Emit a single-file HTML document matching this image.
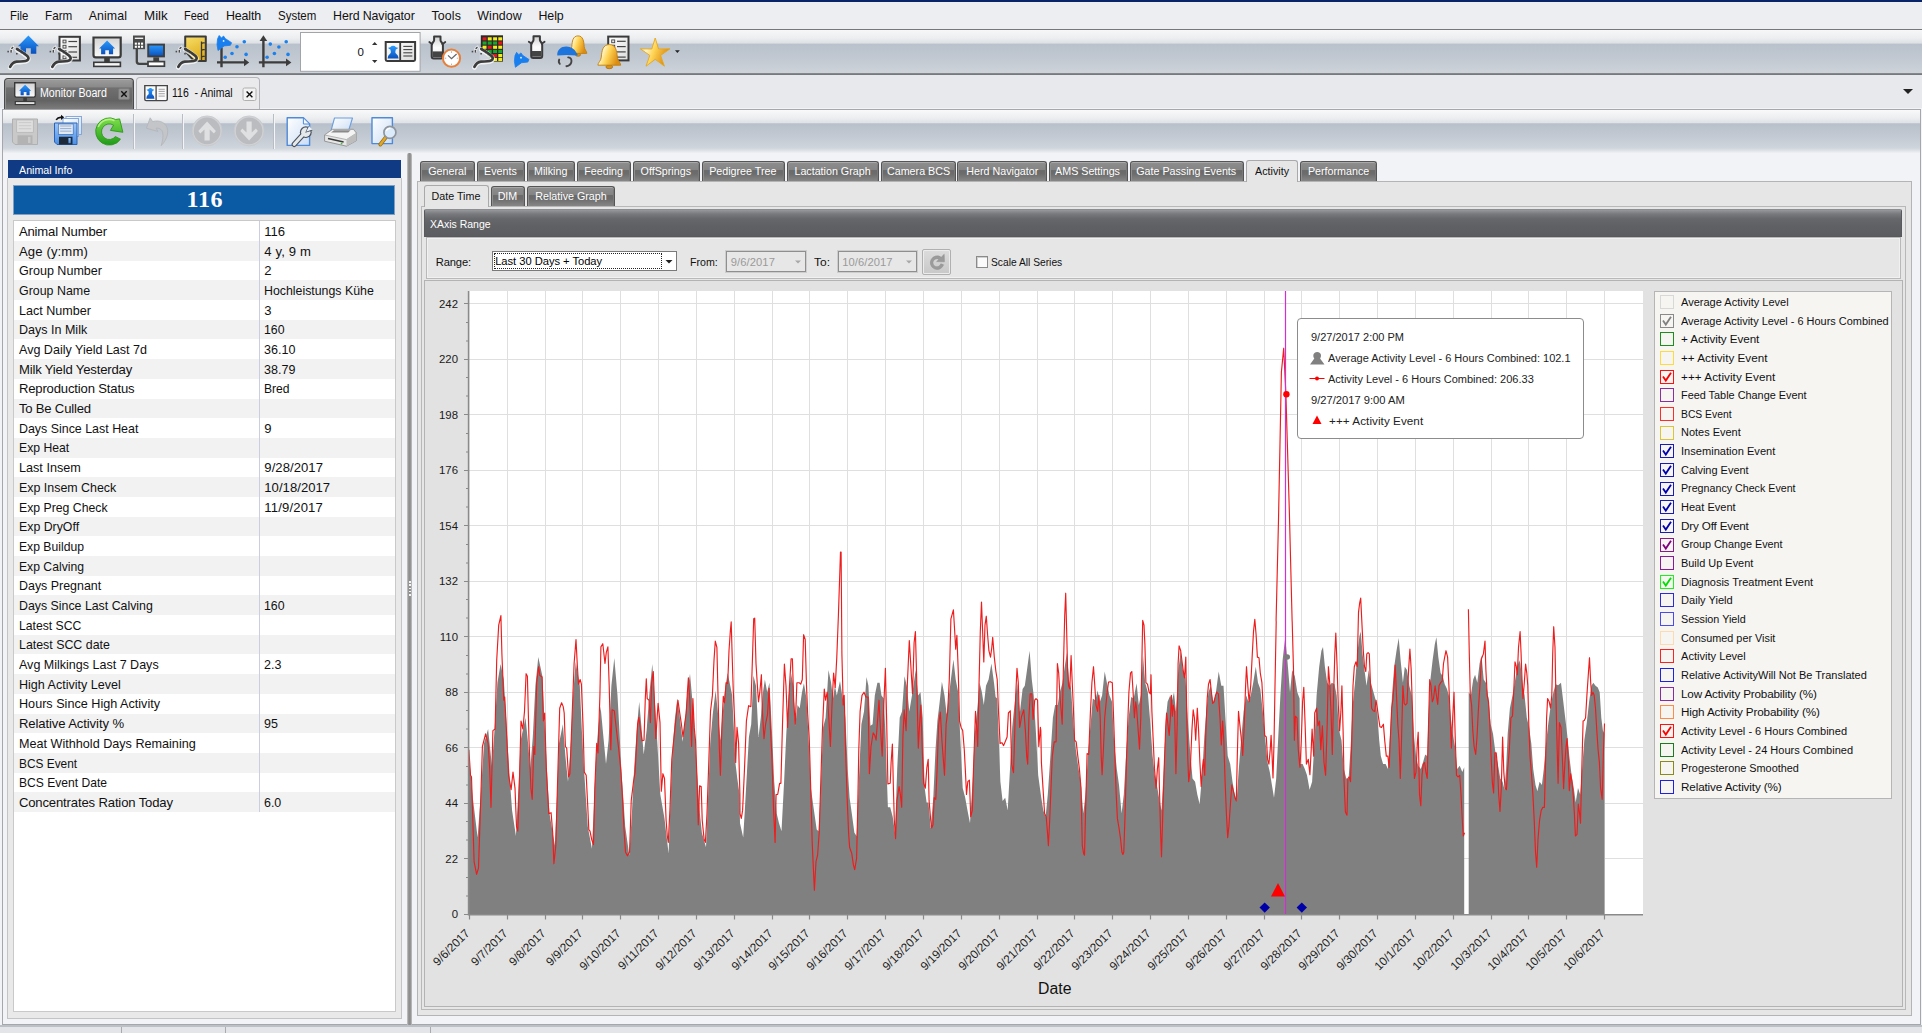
<!DOCTYPE html><html><head><meta charset="utf-8"><title>116 - Animal</title><style>
*{box-sizing:border-box;margin:0;padding:0}
html,body{width:1922px;height:1033px;overflow:hidden;background:#f2f3f7;font-family:"Liberation Sans",sans-serif;font-size:12px;color:#000}
.abs{position:absolute}
.t{position:absolute;white-space:nowrap;line-height:1}
#topline{left:0;top:0;width:1922px;height:2px;background:#0a246a}
#menubar{left:0;top:2px;width:1922px;height:27px;background:#edeef1}
#menubar .t{top:7px;font-size:12.6px;color:#111}
#menuline{left:0;top:29px;width:1922px;height:1px;background:#75777a}
#toolbar{left:0;top:30px;width:1922px;height:43px;background:linear-gradient(#f7f7f8 0,#eceef0 8px,#dee1e5 13px,#b9c1cc 14.2px,#c0c7d0 26px,#ced3da 43px)}
#toolline{left:0;top:73px;width:1922px;height:2px;background:linear-gradient(#8b8e92,#6f7276)}
#tabstrip{left:0;top:75px;width:1922px;height:33px;background:#e8e9ec}
#docarea{left:2px;top:109px;width:1919px;height:916px;background:#f2f3f7;border:1px solid #a5a7ab}
#doctool{left:3px;top:110px;width:1917px;height:43px;background:linear-gradient(#f9f9fa 0,#eceef0 8px,#dfe2e6 12.6px,#b8c0cb 13.8px,#c3cad3 27px,#cfd5dc 38px,#eef0f4 43px)}
.tab1{position:absolute;top:78px;height:30px;border-radius:4px 4px 0 0}
.sep{position:absolute;width:1px;top:114px;height:35px;background:#b9bdc3;border-right:1px solid #f4f5f7;box-sizing:content-box}
/* left panel */
#lp-head{left:8px;top:159.6px;width:392.5px;height:18.7px;background:#103a83}
#lp-body{left:7px;top:178px;width:395px;height:841px;background:#e9e9e9;border:1px solid #c4c4c4;border-top:none}
#lp-num{left:13px;top:185px;width:382.4px;height:30px;background:#0b5aa4;border:1px solid #7f9fc4;color:#fff;font-family:"Liberation Serif",serif;font-weight:bold;font-size:21.3px;letter-spacing:0.6px;text-indent:0.6px;text-align:center;line-height:29.8px}
#lp-tab{left:13px;top:220px;width:383px;height:792px;background:#fff;border:1px solid #c9c9c9}
.row{position:absolute;left:14px;width:381px;height:19.7px}
.row.alt{background:#f2f2f2}
.row .t{top:3.6px;font-size:13.1px;letter-spacing:-0.16px;color:#111}
#coldiv{left:259px;top:221px;width:1px;height:591px;background:#c7cfe0}
/* splitter */
#split{left:407px;top:153px;width:4.6px;height:872px;background:linear-gradient(90deg,#c9c9c9,#8f8f8f 35%,#8d8d8d 65%,#c4c4c4);border-radius:2px 2px 0 0}
/* right panel */
#rp{left:417.4px;top:180.6px;width:1494.6px;height:835px;background:#e6e6e6;border:1px solid #b4b4b4}
.tab2{position:absolute;height:20px;border-radius:3px 3px 0 0;color:#fff;font-size:11.4px;text-align:center;line-height:19px;white-space:nowrap;
 background:linear-gradient(#8e8e8e 0,#848484 40%,#6a6a6a 45%,#6c6c6c 62%,#868686 100%);border:1px solid #555;border-bottom:none;box-shadow:inset 0 1px 0 #a9a9a9, inset 1px 0 0 #8f8f8f, inset -1px 0 0 #7a7a7a}
.tab2 span{display:inline-block;transform:scaleX(0.94)}
.tab2.sel{background:#e6e6e6;color:#111;border:1px solid #a9a9a9;border-bottom:none;box-shadow:none}
#inner{left:421px;top:206px;width:1485px;height:804px;border:1px solid #b8b8b8;background:#e6e6e6}
#xhead{left:424px;top:209px;width:1478px;height:28px;border-radius:2px 2px 0 0;background:linear-gradient(#97989b 0,#78797d 4px,#66676b 9px,#606165 60%,#5c5d61 100%);border:1px solid #58595d;border-top-color:#8d8e91;color:#fff;font-size:12px}
#xbox{left:426px;top:237px;width:1475px;height:42px;border:1px solid #b9b9b9;background:#e6e6e6;box-shadow:inset 0 0 0 1px #f1f1f1}
#chartpanel{left:424px;top:280px;width:1479px;height:727px;border:1px solid #b3b3b3;background:#e2e2e2}
#legend{left:1654px;top:291px;width:238px;height:508px;background:#f6f5f2;border:1px solid #b5b5b5}
.lg{position:absolute;left:1660px;width:14px;height:14px;border:1px solid #000;background:#f6f5f2}
.lgt{position:absolute;left:1681px;font-size:11.5px;letter-spacing:-0.25px;white-space:nowrap;line-height:1;color:#111}
#tooltip{left:1297px;top:318px;width:287px;height:121px;background:#fff;border:1px solid #8c8c8c;border-radius:4px}
#tooltip .t{font-size:11.8px;color:#222}
#status{left:0;top:1025px;width:1922px;height:8px;background:#e4e5e8;border-top:2px solid #bcc0c7}
.input{position:absolute;background:#fff;border:1px solid #8e8e8e}

#lp-num span{display:inline-block;transform:scale(1.13,1.04)}

</style></head><body>
<div class="abs" id="menubar"></div><div class="abs" id="topline"></div><div class="abs" id="menuline"></div>
<div class="t" style="left:9.7px;top:9.5px;font-size:12.4px;transform:scaleX(0.9159);transform-origin:0 50%;color:#111;">File</div>
<div class="t" style="left:44.7px;top:9.5px;font-size:12.4px;transform:scaleX(0.9436);transform-origin:0 50%;color:#111;">Farm</div>
<div class="t" style="left:88.7px;top:9.5px;font-size:12.4px;letter-spacing:0.066px;color:#111;">Animal</div>
<div class="t" style="left:143.7px;top:9.5px;font-size:12.4px;transform:scaleX(1.0799);transform-origin:0 50%;color:#111;">Milk</div>
<div class="t" style="left:184.1px;top:9.5px;font-size:12.4px;transform:scaleX(0.8810);transform-origin:0 50%;color:#111;">Feed</div>
<div class="t" style="left:226.0px;top:9.5px;font-size:12.4px;letter-spacing:-0.141px;color:#111;">Health</div>
<div class="t" style="left:278.1px;top:9.5px;font-size:12.4px;transform:scaleX(0.9264);transform-origin:0 50%;color:#111;">System</div>
<div class="t" style="left:333.1px;top:9.5px;font-size:12.4px;letter-spacing:-0.128px;color:#111;">Herd Navigator</div>
<div class="t" style="left:431.4px;top:9.5px;font-size:12.4px;letter-spacing:0.130px;color:#111;">Tools</div>
<div class="t" style="left:477.3px;top:9.5px;font-size:12.4px;letter-spacing:0.066px;color:#111;">Window</div>
<div class="t" style="left:538.5px;top:9.5px;font-size:12.4px;letter-spacing:-0.076px;color:#111;">Help</div>
<div class="abs" id="toolbar"></div><div class="abs" id="toolline"></div><div class="abs" id="tabstrip"></div>
<svg class="abs" style="left:0;top:30px" width="720" height="44" viewBox="0 30 720 44">
<defs><linearGradient id="gblue" x1="0" y1="0" x2="0" y2="1"><stop offset="0" stop-color="#2a9bff"/><stop offset="1" stop-color="#0a50bd"/></linearGradient><linearGradient id="ggold" x1="0" y1="0" x2="1" y2="1"><stop offset="0" stop-color="#fff3b0"/><stop offset="0.5" stop-color="#ffd24a"/><stop offset="1" stop-color="#e8a21a"/></linearGradient><linearGradient id="gyel" x1="0" y1="0" x2="1" y2="1"><stop offset="0" stop-color="#ffe27a"/><stop offset="1" stop-color="#e3b024"/></linearGradient><linearGradient id="gmon" x1="0" y1="0" x2="0" y2="1"><stop offset="0" stop-color="#d4d4d4"/><stop offset="1" stop-color="#fafafa"/></linearGradient></defs>
<defs><linearGradient id="gsheet" x1="0" y1="0" x2="1" y2="1"><stop offset="0" stop-color="#ffffff"/><stop offset="1" stop-color="#dcdcdc"/></linearGradient><linearGradient id="gbell" x1="0" y1="0" x2="1" y2="0.35"><stop offset="0" stop-color="#f7c648"/><stop offset="0.3" stop-color="#fff4c4"/><stop offset="0.55" stop-color="#ffd455"/><stop offset="1" stop-color="#dd8c12"/></linearGradient><linearGradient id="gbot" x1="0" y1="0" x2="0" y2="1"><stop offset="0" stop-color="#cfcfcf"/><stop offset="0.5" stop-color="#fbfbfb"/><stop offset="1" stop-color="#eeeeee"/></linearGradient><linearGradient id="gnote" x1="0" y1="0" x2="0.4" y2="1"><stop offset="0" stop-color="#f8de6a"/><stop offset="1" stop-color="#dfae1c"/></linearGradient></defs>
<path d="M28.4,35.4 L38.9,46.2 L36.3,46.2 L36.3,53.7 L30.799999999999997,53.7 L30.799999999999997,48.3 L26.0,48.3 L26.0,53.7 L20.5,53.7 L20.5,46.2 L17.9,46.2 Z" fill="url(#gblue)"/>
<path d="M10.1,66.9 C11.8,63.5 13.5,62 16.5,61.7 C19.5,61.4 23,61.6 25.5,61 C28,60.4 29,58.6 28.2,57.2 C27.3,55.6 24.5,54 22.3,52.3 C20.3,50.9 18.5,50 16.9,48.9" fill="none" stroke="#fff" stroke-opacity="0.75" stroke-width="4.6" stroke-linecap="round" transform="translate(0,0.6)"/><path d="M10.1,66.9 C11.8,63.5 13.5,62 16.5,61.7 C19.5,61.4 23,61.6 25.5,61 C28,60.4 29,58.6 28.2,57.2 C27.3,55.6 24.5,54 22.3,52.3 C20.3,50.9 18.5,50 16.9,48.9" fill="none" stroke="#3c3c3c" stroke-width="2.7" stroke-linecap="round"/><path d="M11.2,52.6 Q10.4,48 14.2,46.6" fill="none" stroke="#fff" stroke-opacity="0.7" stroke-width="3"/><path d="M11.2,52.6 Q10.4,48 14.2,46.6" fill="none" stroke="#4a4a4a" stroke-width="1.5" stroke-dasharray="2.6 1.1"/><rect x="7.4" y="50.8" width="1.5" height="1.6" fill="#4a4a4a"/><rect x="16" y="53" width="1.6" height="1.5" fill="#4a4a4a"/>
<rect x="59.5" y="36.8" width="20.400000000000006" height="23.700000000000003" fill="url(#gsheet)" stroke="#3a3a3a" stroke-width="2"/><rect x="63.0" y="40.1" width="3" height="2.8" fill="#e8e8e8" stroke="#444" stroke-width="0.9"/><path d="M68.4,41.5 H77.1" stroke="#444" stroke-width="1.2"/><rect x="63.0" y="45.3" width="3" height="2.8" fill="#e8e8e8" stroke="#444" stroke-width="0.9"/><path d="M68.4,46.7 H77.1" stroke="#444" stroke-width="1.2"/><rect x="63.0" y="50.6" width="3" height="2.8" fill="#e8e8e8" stroke="#444" stroke-width="0.9"/><path d="M68.4,52.0 H77.1" stroke="#444" stroke-width="1.2"/><rect x="63.0" y="55.9" width="3" height="2.8" fill="#e8e8e8" stroke="#444" stroke-width="0.9"/><path d="M68.4,57.3 H77.1" stroke="#444" stroke-width="1.2"/>
<path d="M52.300000000000004,66.9 C54.0,63.5 55.7,62 58.7,61.7 C61.7,61.4 65.2,61.6 67.7,61 C70.2,60.4 71.2,58.6 70.4,57.2 C69.5,55.6 66.7,54 64.5,52.3 C62.5,50.9 60.7,50 59.1,48.9" fill="none" stroke="#fff" stroke-opacity="0.75" stroke-width="4.6" stroke-linecap="round" transform="translate(0,0.6)"/><path d="M52.300000000000004,66.9 C54.0,63.5 55.7,62 58.7,61.7 C61.7,61.4 65.2,61.6 67.7,61 C70.2,60.4 71.2,58.6 70.4,57.2 C69.5,55.6 66.7,54 64.5,52.3 C62.5,50.9 60.7,50 59.1,48.9" fill="none" stroke="#3c3c3c" stroke-width="2.7" stroke-linecap="round"/><path d="M53.400000000000006,52.6 Q52.6,48 56.400000000000006,46.6" fill="none" stroke="#fff" stroke-opacity="0.7" stroke-width="3"/><path d="M53.400000000000006,52.6 Q52.6,48 56.400000000000006,46.6" fill="none" stroke="#4a4a4a" stroke-width="1.5" stroke-dasharray="2.6 1.1"/><rect x="49.6" y="50.8" width="1.5" height="1.6" fill="#4a4a4a"/><rect x="58.2" y="53" width="1.6" height="1.5" fill="#4a4a4a"/>
<path d="M93.5,37.5 H120.7 V55 Q120.7,57.4 118.3,57.4 H95.9 Q93.5,57.4 93.5,55 Z" fill="url(#gmon)" stroke="#3a3a3a" stroke-width="2.2"/>
<path d="M107.1,40.4 L115.08,48.608 L113.104,48.608 L113.104,54.308 L108.92399999999999,54.308 L108.92399999999999,50.204 L105.276,50.204 L105.276,54.308 L101.09599999999999,54.308 L101.09599999999999,48.608 L99.11999999999999,48.608 Z" fill="url(#gblue)"/>
<rect x="104.2" y="58" width="5.6" height="4" fill="#3a3a3a"/><rect x="93.8" y="62.3" width="26.6" height="4.1" fill="#f6f6f6" stroke="#3a3a3a" stroke-width="1.6"/>
<rect x="133" y="35.5" width="12" height="13.7" fill="#4a4a4a"/><rect x="134.8" y="37.6" width="8.4" height="1.4" fill="#eee"/>
<rect x="134.8" y="42.6" width="2.1" height="2.1" fill="#fff"/>
<rect x="137.9" y="42.6" width="2.1" height="2.1" fill="#fff"/>
<rect x="141.0" y="42.6" width="2.1" height="2.1" fill="#fff"/>
<rect x="134.8" y="45.7" width="2.1" height="2.1" fill="#fff"/>
<rect x="137.9" y="45.7" width="2.1" height="2.1" fill="#fff"/>
<rect x="141.0" y="45.7" width="2.1" height="2.1" fill="#fff"/>
<path d="M136.8,49 V61.5 Q136.8,63.8 139.2,63.8 H148" fill="none" stroke="#444" stroke-width="2.3"/>
<rect x="148.2" y="44.6" width="15.8" height="11.8" fill="url(#gblue)" stroke="#3e3e3e" stroke-width="1.9"/><rect x="153.3" y="57.3" width="5.8" height="3.8" fill="#3e3e3e"/><rect x="148" y="61.6" width="16.4" height="4.6" fill="#fff" stroke="#3e3e3e" stroke-width="1.7"/>
<path d="M185.2,36.6 H205.8 V60.9 H194 L185.2,51 Z" fill="url(#gnote)" stroke="#3a3a3a" stroke-width="2" stroke-linejoin="round"/>
<path d="M201.5,41.5 V60" stroke="#3a3a3a" stroke-width="1.3"/>
<path d="M204.8,42.8 H203 Q201.6,42.8 201.6,44.0" fill="none" stroke="#3a3a3a" stroke-width="1.2"/>
<path d="M204.8,49.6 H203 Q201.6,49.6 201.6,50.800000000000004" fill="none" stroke="#3a3a3a" stroke-width="1.2"/>
<path d="M204.8,56.4 H203 Q201.6,56.4 201.6,57.6" fill="none" stroke="#3a3a3a" stroke-width="1.2"/>
<path d="M178.29999999999998,66.9 C180.0,63.5 181.7,62 184.7,61.7 C187.7,61.4 191.2,61.6 193.7,61 C196.2,60.4 197.2,58.6 196.39999999999998,57.2 C195.5,55.6 192.7,54 190.5,52.3 C188.5,50.9 186.7,50 185.1,48.9" fill="none" stroke="#fff" stroke-opacity="0.75" stroke-width="4.6" stroke-linecap="round" transform="translate(0,0.6)"/><path d="M178.29999999999998,66.9 C180.0,63.5 181.7,62 184.7,61.7 C187.7,61.4 191.2,61.6 193.7,61 C196.2,60.4 197.2,58.6 196.39999999999998,57.2 C195.5,55.6 192.7,54 190.5,52.3 C188.5,50.9 186.7,50 185.1,48.9" fill="none" stroke="#3c3c3c" stroke-width="2.7" stroke-linecap="round"/><path d="M179.39999999999998,52.6 Q178.6,48 182.39999999999998,46.6" fill="none" stroke="#fff" stroke-opacity="0.7" stroke-width="3"/><path d="M179.39999999999998,52.6 Q178.6,48 182.39999999999998,46.6" fill="none" stroke="#4a4a4a" stroke-width="1.5" stroke-dasharray="2.6 1.1"/><rect x="175.6" y="50.8" width="1.5" height="1.6" fill="#4a4a4a"/><rect x="184.2" y="53" width="1.6" height="1.5" fill="#4a4a4a"/>
<path d="M221.5,47.5 V67.3 M217,62.4 H245" stroke="#3c3c3c" stroke-width="2.4" fill="none"/><path d="M244,58.6 L249.2,62.4 L244,66.2 Z" fill="#3c3c3c"/>
<path d="M217.6,38.7 L219.2,35.5 L221.4,37.9 L223.6,36.1 L225.2,38.5 L231.6,42.7 L230.4,45.3 L224.2,45.9 L218.0,50.5 L217.0,44.5 Z" fill="#1a7fee" stroke="#1a7fee" stroke-width="0.8" stroke-linejoin="round"/><circle cx="223.6" cy="40.9" r="0.9" fill="#e8f2ff"/>
<circle cx="244.3" cy="41.8" r="1.8" fill="#1a82f0"/>
<circle cx="237" cy="46.8" r="1.8" fill="#1a82f0"/>
<circle cx="232" cy="53.5" r="1.8" fill="#1a82f0"/>
<circle cx="246.1" cy="54.4" r="1.8" fill="#1a82f0"/>
<circle cx="225.2" cy="57.3" r="1.8" fill="#1a82f0"/>
<path d="M263.4,38.5 V67.3 M258.9,62.4 H287" stroke="#3c3c3c" stroke-width="2.4" fill="none"/><path d="M286,58.6 L291.4,62.4 L286,66.2 Z" fill="#3c3c3c"/><path d="M259.6,41 L263.4,35.2 L267.2,41 Z" fill="#3c3c3c"/>
<circle cx="286.2" cy="41.8" r="1.8" fill="#1a82f0"/>
<circle cx="270.3" cy="44.1" r="1.8" fill="#1a82f0"/>
<circle cx="278.9" cy="47" r="1.8" fill="#1a82f0"/>
<circle cx="274.4" cy="53.5" r="1.8" fill="#1a82f0"/>
<circle cx="288" cy="54.4" r="1.8" fill="#1a82f0"/>
<circle cx="267.1" cy="57.3" r="1.8" fill="#1a82f0"/>
<rect x="300.5" y="32.5" width="119.6" height="38.8" fill="#fff" stroke="#a2a4a8" stroke-width="1"/>
<path d="M372,45 l2.7,-3.1 l2.7,3.1 Z M372,60 l2.7,3.1 l2.7,-3.1 Z" fill="#333"/>
<text x="364" y="56" font-size="11.5" text-anchor="end" fill="#111" font-family="Liberation Sans, sans-serif">0</text>
<path d="M385.7,41.9 H415.1 V59.5 Q415.1,60.9 413.7,60.9 H387.1 Q385.7,60.9 385.7,59.5 Z" fill="url(#gsheet)" stroke="#3a3a3a" stroke-width="2"/><path d="M400.2,42 V61" stroke="#3a3a3a" stroke-width="1.8"/>
<path d="M388,47.6 q1.2,0.2 2.2,-0.4 q1.4,-1.4 2.9,-1.4 q1.5,0 2.9,1.4 q1,0.6 2.2,0.4 q-0.4,1.6 -2.4,1.8 l-0.5,2.6 q-0.2,1.2 1.1,2 q2,1.2 2.2,4.4 h-11 q0.2,-3.2 2.2,-4.4 q1.3,-0.8 1.1,-2 l-0.5,-2.6 q-2,-0.2 -2.4,-1.8 Z" fill="url(#gblue)"/>
<path d="M403.3,46.4 H412.3" stroke="#444" stroke-width="1.1"/>
<path d="M403.3,49.6 H412.3" stroke="#444" stroke-width="1.1"/>
<path d="M403.3,52.8 H412.3" stroke="#444" stroke-width="1.1"/>
<path d="M403.3,56 H412.3" stroke="#444" stroke-width="1.1"/>
<path d="M434.1,36.5 H440.5 V40.3 C440.5,42.0 442.9,42.7 442.9,45.1 V56.6 Q442.9,58.6 440.9,58.6 H433.7 Q431.7,58.6 431.7,56.6 V45.1 C431.7,42.7 434.1,42.0 434.1,40.3 Z" fill="url(#gbot)" stroke="#3a3a3a" stroke-width="2" stroke-linejoin="round"/><path d="M432.5,51.4 H442.1 V57.4 H432.5 Z" fill="#444"/><path d="M429.3,42.0 L432.2,44.2 M445.3,42.0 L442.4,44.2" stroke="#3a3a3a" stroke-width="1.8" stroke-linecap="round"/>
<circle cx="451.5" cy="58.2" r="8.6" fill="#fff" stroke="#e5813c" stroke-width="2"/><path d="M448,55.4 L451.5,58.7 L456.6,54" fill="none" stroke="#666" stroke-width="1.2"/><path d="M451.5,51.3 v1.6 M451.5,63.6 v1.6 M444.6,58.2 h1.6 M456.8,58.2 h1.6" stroke="#aaa" stroke-width="0.9"/>
<rect x="480.8" y="35.3" width="22.2" height="26.3" fill="#2a2a2a"/>
<rect x="482.6" y="37.3" width="3.9" height="3.1" fill="#e8141c"/>
<rect x="487.8" y="37.3" width="3.9" height="3.1" fill="#f5ee14"/>
<rect x="493.1" y="37.3" width="3.9" height="3.1" fill="#f5ee14"/>
<rect x="498.3" y="37.3" width="3.9" height="3.1" fill="#f5ee14"/>
<rect x="482.6" y="41.5" width="3.9" height="3.1" fill="#14a82c"/>
<rect x="487.8" y="41.5" width="3.9" height="3.1" fill="#14a82c"/>
<rect x="493.1" y="41.5" width="3.9" height="3.1" fill="#14a82c"/>
<rect x="498.3" y="41.5" width="3.9" height="3.1" fill="#e8141c"/>
<rect x="482.6" y="45.7" width="3.9" height="3.1" fill="#f5ee14"/>
<rect x="487.8" y="45.7" width="3.9" height="3.1" fill="#e8141c"/>
<rect x="493.1" y="45.7" width="3.9" height="3.1" fill="#f5ee14"/>
<rect x="498.3" y="45.7" width="3.9" height="3.1" fill="#f5ee14"/>
<rect x="482.6" y="49.9" width="3.9" height="3.1" fill="#14a82c"/>
<rect x="487.8" y="49.9" width="3.9" height="3.1" fill="#14a82c"/>
<rect x="493.1" y="49.9" width="3.9" height="3.1" fill="#14a82c"/>
<rect x="498.3" y="49.9" width="3.9" height="3.1" fill="#14a82c"/>
<rect x="482.6" y="54.0" width="3.9" height="3.1" fill="#f5ee14"/>
<rect x="487.8" y="54.0" width="3.9" height="3.1" fill="#14a82c"/>
<rect x="493.1" y="54.0" width="3.9" height="3.1" fill="#e8141c"/>
<rect x="498.3" y="54.0" width="3.9" height="3.1" fill="#f5ee14"/>
<rect x="482.6" y="57.9" width="3.9" height="3.1" fill="#f5ee14"/>
<rect x="487.8" y="57.9" width="3.9" height="3.1" fill="#f5ee14"/>
<rect x="493.1" y="57.9" width="3.9" height="3.1" fill="#f5ee14"/>
<rect x="498.3" y="57.9" width="3.9" height="3.1" fill="#f5ee14"/>
<path d="M479.5,47 L494,62.5 H479.5 Z" fill="#cdd3da"/>
<path d="M474.40000000000003,66.9 C476.1,63.5 477.8,62 480.8,61.7 C483.8,61.4 487.3,61.6 489.8,61 C492.3,60.4 493.3,58.6 492.5,57.2 C491.6,55.6 488.8,54 486.6,52.3 C484.6,50.9 482.8,50 481.2,48.9" fill="none" stroke="#fff" stroke-opacity="0.75" stroke-width="4.6" stroke-linecap="round" transform="translate(0,0.6)"/><path d="M474.40000000000003,66.9 C476.1,63.5 477.8,62 480.8,61.7 C483.8,61.4 487.3,61.6 489.8,61 C492.3,60.4 493.3,58.6 492.5,57.2 C491.6,55.6 488.8,54 486.6,52.3 C484.6,50.9 482.8,50 481.2,48.9" fill="none" stroke="#3c3c3c" stroke-width="2.7" stroke-linecap="round"/><path d="M475.5,52.6 Q474.7,48 478.5,46.6" fill="none" stroke="#fff" stroke-opacity="0.7" stroke-width="3"/><path d="M475.5,52.6 Q474.7,48 478.5,46.6" fill="none" stroke="#4a4a4a" stroke-width="1.5" stroke-dasharray="2.6 1.1"/><rect x="471.7" y="50.8" width="1.5" height="1.6" fill="#4a4a4a"/><rect x="480.3" y="53" width="1.6" height="1.5" fill="#4a4a4a"/>
<path d="M533.5,36.3 H539.9 V40.0 C539.9,41.7 542.2,42.4 542.2,44.7 V55.9 Q542.2,57.9 540.2,57.9 H533.2 Q531.2,57.9 531.2,55.9 V44.7 C531.2,42.4 533.5,41.7 533.5,40.0 Z" fill="url(#gbot)" stroke="#3a3a3a" stroke-width="2" stroke-linejoin="round"/><path d="M532.0,51 H541.4 V56.699999999999996 H532.0 Z" fill="#444"/><path d="M528.8,41.7 L531.7,43.8 M544.6,41.7 L541.7,43.8" stroke="#3a3a3a" stroke-width="1.8" stroke-linecap="round"/>
<path d="M515.0,55.5 L516.6,52.3 L518.8,54.7 L521.0,52.9 L522.6,55.3 L529.0,59.5 L527.8,62.1 L521.6,62.7 L515.4,67.3 L514.4,61.3 Z" fill="#1a7fee" stroke="#1a7fee" stroke-width="0.8" stroke-linejoin="round"/><circle cx="521.0" cy="57.7" r="0.9" fill="#e8f2ff"/>
<ellipse cx="578.0" cy="54.8" rx="2.6" ry="1.5" fill="#d9901a" stroke="#a86a0a" stroke-width="0.7"/><path d="M578.0,35.9 C583.3,35.9 583.8,41.6 584.2,46.5 C584.5,50.1 586.8,50.9 586.8,53.4 L569.2,53.4 C569.2,50.9 571.5,50.1 571.8,46.5 C572.2,41.6 572.7,35.9 578.0,35.9 Z" fill="url(#gbell)" stroke="#c07f10" stroke-width="0.9"/>
<path d="M557.3,55.6 C556.6,49.5 561.5,46.2 566.5,46.4 C571,46.6 574.5,48.6 576.3,52.6 L577.6,54.4 Q578,55.6 576.6,55.6 L567,55 Q562,55 557.3,55.6 Z" fill="#1d74dd"/>
<path d="M559.2,59.6 q-1,2.6 0.6,4.2 M568.2,57.4 q3.8,0.4 3.2,4.4 q-0.6,3.6 -5,4.4" fill="none" stroke="#444" stroke-width="1.9" stroke-linecap="round"/>
<rect x="608.2" y="36.6" width="20.299999999999955" height="23.799999999999997" fill="url(#gsheet)" stroke="#3a3a3a" stroke-width="2"/><rect x="611.7" y="39.9" width="3" height="2.8" fill="#e8e8e8" stroke="#444" stroke-width="0.9"/><path d="M617.0,41.3 H625.7" stroke="#444" stroke-width="1.2"/><rect x="611.7" y="45.2" width="3" height="2.8" fill="#e8e8e8" stroke="#444" stroke-width="0.9"/><path d="M617.0,46.6 H625.7" stroke="#444" stroke-width="1.2"/><rect x="611.7" y="50.5" width="3" height="2.8" fill="#e8e8e8" stroke="#444" stroke-width="0.9"/><path d="M617.0,51.9 H625.7" stroke="#444" stroke-width="1.2"/><rect x="611.7" y="55.7" width="3" height="2.8" fill="#e8e8e8" stroke="#444" stroke-width="0.9"/><path d="M617.0,57.1 H625.7" stroke="#444" stroke-width="1.2"/>
<ellipse cx="609.3" cy="66.9" rx="3.4" ry="1.8" fill="#d9901a" stroke="#a86a0a" stroke-width="0.7"/><path d="M609.3,44.6 C616.1,44.6 616.8,51.3 617.3,57.1 C617.7,61.4 620.7,62.4 620.7,65.2 L597.9,65.2 C597.9,62.4 600.9,61.4 601.3,57.1 C601.8,51.3 602.5,44.6 609.3,44.6 Z" fill="url(#gbell)" stroke="#c07f10" stroke-width="0.9"/>
<polygon points="655.2,38.0 658.6,49.0 670.0,48.8 660.6,55.4 664.4,66.2 655.2,59.3 646.0,66.2 649.8,55.4 640.4,48.8 651.8,49.0" fill="url(#gbell)" stroke="#e3a720" stroke-width="0.9" stroke-linejoin="round"/>
<path d="M675,50.2 h4.8 l-2.4,2.7 Z" fill="#222"/>
</svg>
<div class="tab1" style="left:4px;width:130px;top:78px;height:31.4px;background:linear-gradient(#9c9c9c 0,#8a8a8a 26%,#707070 30%,#636363 72%,#7c7c7c 100%);border:1px solid #4a4a4a;border-bottom:none;box-shadow:inset 0 1px 0 #adadad, inset 1px 0 0 #8f8f8f, inset -1px 0 0 #7a7a7a"></div>
<div class="tab1" style="left:135.5px;width:124.5px;top:77.3px;height:33px;background:#eaeaec;border:1px solid #b4b6ba;border-bottom:none"></div>
<div class="t" style="left:39.6px;top:87.2px;font-size:12px;transform:scaleX(0.8863);transform-origin:0 50%;color:#fff;">Monitor Board</div>
<div class="t" style="left:172px;top:87.2px;font-size:12px;transform:scaleX(0.8764);transform-origin:0 50%;color:#111;">116&nbsp; - Animal</div>
<svg class="abs" style="left:0;top:75px" width="270" height="34" viewBox="0 75 270 34">
<path d="M14.7,82.7 H35.4 V95.6 Q35.4,97.1 33.9,97.1 H16.2 Q14.7,97.1 14.7,95.6 Z" fill="url(#gmon)" stroke="#3a3a3a" stroke-width="1.4"/>
<path d="M25.1,84.7 L31.085,90.85600000000001 L29.603,90.85600000000001 L29.603,95.131 L26.468,95.131 L26.468,92.053 L23.732000000000003,92.053 L23.732000000000003,95.131 L20.597,95.131 L20.597,90.85600000000001 L19.115000000000002,90.85600000000001 Z" fill="url(#gblue)"/>
<rect x="23.3" y="97.6" width="3.6" height="3.4" fill="#3a3a3a"/><rect x="15.3" y="101.6" width="19.7" height="2.9" fill="#f4f4f4" stroke="#3a3a3a" stroke-width="1.2"/>
<rect x="118.5" y="88.5" width="11" height="11" rx="1.5" fill="#929292" stroke="#7a7a7a" stroke-width="1"/><path d="M121.3,91.3 l5.4,5.4 M126.7,91.3 l-5.4,5.4" stroke="#111" stroke-width="1.4"/>
<rect x="243" y="88" width="13" height="12.5" rx="1.5" fill="#f3f3f3" stroke="#b0b0b0" stroke-width="1"/><path d="M246.6,91.4 l5.8,5.8 M252.4,91.4 l-5.8,5.8" stroke="#111" stroke-width="1.4"/>
<path d="M144.8,85.6 H167.3 V99.2 Q167.3,100.6 165.9,100.6 H146.2 Q144.8,100.6 144.8,99.2 Z" fill="#fbfbfb" stroke="#454545" stroke-width="1.4"/><path d="M156.1,85.6 V100.6" stroke="#454545" stroke-width="1.3"/>
<g transform="translate(146.6,88.2) scale(0.74,0.83)"><path d="M0,1.6 q1.2,0.2 2.2,-0.4 q1.4,-1.4 2.9,-1.4 q1.5,0 2.9,1.4 q1,0.6 2.2,0.4 q-0.4,1.6 -2.4,1.8 l-0.5,2.6 q-0.2,1.2 1.1,2 q2,1.2 2.2,4.8 h-11 q0.2,-3.6 2.2,-4.8 q1.3,-0.8 1.1,-2 l-0.5,-2.6 q-2,-0.2 -2.4,-1.8 Z" fill="url(#gblue)"/></g>
<path d="M158.6,89.3 H164.8" stroke="#a8a8a8" stroke-width="1.1"/>
<path d="M158.6,91.4 H164.8" stroke="#a8a8a8" stroke-width="1.1"/>
<path d="M158.6,93.7 H164.8" stroke="#a8a8a8" stroke-width="1.1"/>
<path d="M158.6,96.1 H164.8" stroke="#a8a8a8" stroke-width="1.1"/>
</svg>
<svg class="abs" style="left:1900px;top:86px" width="16" height="10"><path d="M3,3 h10 l-5,5 Z" fill="#222"/></svg>
<div class="abs" id="docarea"></div><div class="abs" id="doctool"></div>
<div class="sep" style="left:133px"></div>
<div class="sep" style="left:182px"></div>
<div class="sep" style="left:273px"></div>
<svg class="abs" style="left:0;top:110px" width="420" height="44" viewBox="0 110 420 44">
<defs><linearGradient id="ggreen" x1="0" y1="0" x2="0" y2="1"><stop offset="0" stop-color="#7fe04a"/><stop offset="1" stop-color="#1f9a1a"/></linearGradient><linearGradient id="gdoc" x1="0" y1="0" x2="1" y2="1"><stop offset="0" stop-color="#ffffff"/><stop offset="1" stop-color="#c9dcf5"/></linearGradient><linearGradient id="gfl" x1="0" y1="0" x2="0" y2="1"><stop offset="0" stop-color="#9cc7f8"/><stop offset="1" stop-color="#4a8fe6"/></linearGradient></defs>
<path d="M12.5,119 H37.5 V144.5 H15.0 L12.5,142.0 Z" fill="#c9c9c9" stroke="#b0b0b0" stroke-width="1"/><rect x="16.75" y="120" width="16.5" height="12.24" fill="#dedede" stroke="#b0b0b0" stroke-width="0.6"/><path d="M18.75,122.57 h12.5 M18.75,125.63 h12.5 M18.75,128.69 h12.5" stroke="#b0b0b0" stroke-width="0.7" opacity="0.6"/><rect x="17.5" y="135.32" width="15.0" height="9.18" fill="#b3b3b3"/><rect x="28.0" y="136.85" width="2.5" height="6.12" fill="#c9c9c9"/>
<rect x="66" y="116.5" width="15.5" height="18" fill="url(#gdoc)" stroke="#7da2d6" stroke-width="0.9"/><rect x="63" y="118.5" width="15.5" height="18" fill="url(#gdoc)" stroke="#7da2d6" stroke-width="0.9"/>
<path d="M54.5,123 H77.0 V144.5 H57.0 L54.5,142.0 Z" fill="url(#gfl)" stroke="#2a62b6" stroke-width="1"/><rect x="58.325" y="124" width="14.850000000000001" height="10.32" fill="#e4e9f0" stroke="#2a62b6" stroke-width="0.6"/><path d="M60.125,126.01 h11.25 M60.125,128.59 h11.25 M60.125,131.17 h11.25" stroke="#2a62b6" stroke-width="0.7" opacity="0.6"/><rect x="59.0" y="136.76" width="13.5" height="7.739999999999999" fill="#1d2a3c"/><rect x="68.45" y="138.05" width="2.25" height="5.16" fill="url(#gfl)"/>
<path d="M55.5,119.5 q2,-3.2 5.5,-3 v-1.8 l3.2,2.6 l-3.2,2.6 v-1.7 q-2.6,-0.2 -4.2,2 Z" fill="#111"/>
<path d="M120.5,139.2 A13.6,13.6 0 1 1 115.7,119.5 L119.6,118.9 L122.9,132.3 L110.4,130.4 L113.6,125.2 A7.8,7.8 0 1 0 115.4,136.6 Z" fill="url(#ggreen)" stroke="#2c9a18" stroke-width="0.9" stroke-linejoin="round"/>
<path d="M98.2,127 A11.8,11.8 0 0 1 114.5,120.7" fill="none" stroke="#c8f59a" stroke-width="1.6" stroke-opacity="0.8"/>
<path d="M146.4,128.2 L150.2,117.8 L152.6,121.6 C160,119.5 167,123 167.6,130.5 C168.1,137 164.5,142 161.2,145.7 C162.5,141 163.6,136 162.6,132.4 C161.6,128.8 158.6,127.6 156,128.2 L157.9,131.4 Z" fill="#c3c5c8" stroke="#b3b5b8" stroke-width="0.8" stroke-linejoin="round"/>
<circle cx="207.1" cy="130.9" r="15" fill="#d0d2d4" stroke="#c6c8cb" stroke-width="0.8"/><circle cx="207.1" cy="130.9" r="13.3" fill="#babcbf"/>
<path d="M207.1,121.5 L215.9,131 L213.9,133.4 L209.7,129.4 V140.6 H204.5 V129.4 L200.29999999999998,133.4 L198.29999999999998,131 Z" fill="#dfe0e1"/>
<circle cx="249.1" cy="130.9" r="15" fill="#d0d2d4" stroke="#c6c8cb" stroke-width="0.8"/><circle cx="249.1" cy="130.9" r="13.3" fill="#babcbf"/>
<path d="M249.1,140.6 L257.9,131 L255.9,128.6 L251.7,132.6 V121.5 H246.5 V132.6 L242.29999999999998,128.6 L240.29999999999998,131 Z" fill="#dfe0e1"/>
<path d="M287.2,117.8 H303.4 L309.6,124 V145.4 H287.2 Z" fill="url(#gdoc)" stroke="#4f8ad9" stroke-width="1.4" stroke-linejoin="round"/><path d="M303.4,117.8 V124 H309.6 Z" fill="#f4f8fe" stroke="#4f8ad9" stroke-width="1"/>
<path d="M294.3,144.3 L303.6,134" stroke="#4a525c" stroke-width="5.4" stroke-linecap="round"/><circle cx="305.8" cy="132.2" r="5.9" fill="#4a525c"/>
<path d="M294.3,144.3 L303.6,134" stroke="#e6e9ec" stroke-width="3.2" stroke-linecap="round"/><circle cx="305.8" cy="132.2" r="4.7" fill="#e6e9ec"/>
<path d="M305.2,132.8 L308.2,126 L312.6,130.4 Z" fill="#4a525c"/><path d="M306.2,131.8 L309,126.2 L312.4,129.6 Z" fill="#eaf1fb"/>
<path d="M334.5,118 H352.5 L348,132.5 H330.5 Z" fill="url(#gdoc)" stroke="#6c9ddd" stroke-width="1.1" stroke-linejoin="round"/>
<path d="M324.6,135 L332.5,129.4 H353.5 L356.4,133.2 V140.6 L346.5,146.2 L324.6,141.2 Z" fill="#e6e6e6" stroke="#8d8d8d" stroke-width="0.9" stroke-linejoin="round"/>
<path d="M324.6,135 L346.5,139.6 L356.4,133.2 L353.5,129.4 H332.5 Z" fill="#f3f3f3" stroke="#9a9a9a" stroke-width="0.7" stroke-linejoin="round"/><path d="M346.5,139.6 V146.2 L356.4,140.6 V133.2 Z" fill="#bdbdbd"/>
<path d="M334,130.2 H350.6 L348.2,132.6 H331 Z" fill="#8a8a8a"/><path d="M328,138.6 L343.6,142" stroke="#3a3a3a" stroke-width="1.5"/><circle cx="341.6" cy="143.6" r="0.9" fill="#3ac13a"/>
<path d="M372,117.8 H392.4 V143.6 H372 Z" fill="url(#gdoc)" stroke="#4f8ad9" stroke-width="1.4" stroke-linejoin="round"/>
<path d="M385.6,137.6 L380.4,144.4" stroke="#9a6a10" stroke-width="4" stroke-linecap="round"/><path d="M385.6,137.6 L380.4,144.4" stroke="#e0a828" stroke-width="2.4" stroke-linecap="round"/>
<circle cx="389.9" cy="132.4" r="6" fill="#dcebfb" stroke="#8e959d" stroke-width="1.7"/><path d="M386.3,131 A4,4 0 0 1 390.4,128.4" fill="none" stroke="#fff" stroke-width="1.3"/>
</svg>
<div class="abs" id="lp-head"></div>
<div class="t" style="left:18.7px;top:164.5px;font-size:11.2px;transform:scaleX(0.9549);transform-origin:0 50%;color:#fff;">Animal Info</div>
<div class="abs" id="lp-body"></div><div class="abs" id="lp-tab"></div>
<div class="abs" id="lp-num"><span>116</span></div>
<div class="row" style="top:221.30px"></div>
<div class="t" style="left:18.9px;top:224.9px;font-size:13.1px;letter-spacing:-0.175px;color:#111;">Animal Number</div>
<div class="t" style="left:264.3px;top:224.9px;font-size:13.1px;letter-spacing:-0.095px;color:#111;">116</div>
<div class="row alt" style="top:240.99px"></div>
<div class="t" style="left:18.9px;top:244.59px;font-size:13.1px;letter-spacing:0.141px;color:#111;">Age (y:mm)</div>
<div class="t" style="left:264.3px;top:244.59px;font-size:13.1px;letter-spacing:0.148px;color:#111;">4 y, 9 m</div>
<div class="row" style="top:260.68px"></div>
<div class="t" style="left:18.9px;top:264.28px;font-size:13.1px;transform:scaleX(0.9580);transform-origin:0 50%;color:#111;">Group Number</div>
<div class="t" style="left:264.3px;top:264.28px;font-size:13.1px;letter-spacing:-0.16px;color:#111">2</div>
<div class="row alt" style="top:280.37px"></div>
<div class="t" style="left:18.9px;top:283.97px;font-size:13.1px;transform:scaleX(0.9481);transform-origin:0 50%;color:#111;">Group Name</div>
<div class="t" style="left:264.3px;top:283.97px;font-size:13.1px;transform:scaleX(0.9423);transform-origin:0 50%;color:#111;">Hochleistungs Kühe</div>
<div class="row" style="top:300.06px"></div>
<div class="t" style="left:18.9px;top:303.66px;font-size:13.1px;transform:scaleX(0.9601);transform-origin:0 50%;color:#111;">Lact Number</div>
<div class="t" style="left:264.3px;top:303.66px;font-size:13.1px;letter-spacing:-0.16px;color:#111">3</div>
<div class="row alt" style="top:319.75px"></div>
<div class="t" style="left:18.9px;top:323.35px;font-size:13.1px;transform:scaleX(0.9561);transform-origin:0 50%;color:#111;">Days In Milk</div>
<div class="t" style="left:264.3px;top:323.35px;font-size:13.1px;transform:scaleX(0.9425);transform-origin:0 50%;color:#111;">160</div>
<div class="row" style="top:339.44px"></div>
<div class="t" style="left:18.9px;top:343.04px;font-size:13.1px;transform:scaleX(0.9577);transform-origin:0 50%;color:#111;">Avg Daily Yield Last 7d</div>
<div class="t" style="left:264.3px;top:343.04px;font-size:13.1px;transform:scaleX(0.9578);transform-origin:0 50%;color:#111;">36.10</div>
<div class="row alt" style="top:359.13px"></div>
<div class="t" style="left:18.9px;top:362.73px;font-size:13.1px;letter-spacing:-0.161px;color:#111;">Milk Yield Yesterday</div>
<div class="t" style="left:264.3px;top:362.73px;font-size:13.1px;transform:scaleX(0.9578);transform-origin:0 50%;color:#111;">38.79</div>
<div class="row" style="top:378.82px"></div>
<div class="t" style="left:18.9px;top:382.42px;font-size:13.1px;letter-spacing:-0.163px;color:#111;">Reproduction Status</div>
<div class="t" style="left:264.3px;top:382.42px;font-size:13.1px;transform:scaleX(0.9251);transform-origin:0 50%;color:#111;">Bred</div>
<div class="row alt" style="top:398.51px"></div>
<div class="t" style="left:18.9px;top:402.11px;font-size:13.1px;letter-spacing:-0.190px;color:#111;">To Be Culled</div>
<div class="row" style="top:418.20px"></div>
<div class="t" style="left:18.9px;top:421.8px;font-size:13.1px;transform:scaleX(0.9479);transform-origin:0 50%;color:#111;">Days Since Last Heat</div>
<div class="t" style="left:264.3px;top:421.8px;font-size:13.1px;letter-spacing:-0.16px;color:#111">9</div>
<div class="row alt" style="top:437.89px"></div>
<div class="t" style="left:18.9px;top:441.49px;font-size:13.1px;transform:scaleX(0.9316);transform-origin:0 50%;color:#111;">Exp Heat</div>
<div class="row" style="top:457.58px"></div>
<div class="t" style="left:18.9px;top:461.18px;font-size:13.1px;transform:scaleX(0.9645);transform-origin:0 50%;color:#111;">Last Insem</div>
<div class="t" style="left:264.3px;top:461.18px;font-size:13.1px;letter-spacing:0.047px;color:#111;">9/28/2017</div>
<div class="row alt" style="top:477.27px"></div>
<div class="t" style="left:18.9px;top:480.87px;font-size:13.1px;transform:scaleX(0.9478);transform-origin:0 50%;color:#111;">Exp Insem Check</div>
<div class="t" style="left:264.3px;top:480.87px;font-size:13.1px;letter-spacing:0.033px;color:#111;">10/18/2017</div>
<div class="row" style="top:496.96px"></div>
<div class="t" style="left:18.9px;top:500.56px;font-size:13.1px;transform:scaleX(0.9360);transform-origin:0 50%;color:#111;">Exp Preg Check</div>
<div class="t" style="left:264.3px;top:500.56px;font-size:13.1px;letter-spacing:0.155px;color:#111;">11/9/2017</div>
<div class="row alt" style="top:516.65px"></div>
<div class="t" style="left:18.9px;top:520.25px;font-size:13.1px;transform:scaleX(0.9417);transform-origin:0 50%;color:#111;">Exp DryOff</div>
<div class="row" style="top:536.34px"></div>
<div class="t" style="left:18.9px;top:539.94px;font-size:13.1px;transform:scaleX(0.9297);transform-origin:0 50%;color:#111;">Exp Buildup</div>
<div class="row alt" style="top:556.03px"></div>
<div class="t" style="left:18.9px;top:559.63px;font-size:13.1px;transform:scaleX(0.9299);transform-origin:0 50%;color:#111;">Exp Calving</div>
<div class="row" style="top:575.72px"></div>
<div class="t" style="left:18.9px;top:579.32px;font-size:13.1px;transform:scaleX(0.9486);transform-origin:0 50%;color:#111;">Days Pregnant</div>
<div class="row alt" style="top:595.41px"></div>
<div class="t" style="left:18.9px;top:599.01px;font-size:13.1px;transform:scaleX(0.9431);transform-origin:0 50%;color:#111;">Days Since Last Calving</div>
<div class="t" style="left:264.3px;top:599.01px;font-size:13.1px;transform:scaleX(0.9425);transform-origin:0 50%;color:#111;">160</div>
<div class="row" style="top:615.10px"></div>
<div class="t" style="left:18.9px;top:618.7px;font-size:13.1px;transform:scaleX(0.9316);transform-origin:0 50%;color:#111;">Latest SCC</div>
<div class="row alt" style="top:634.79px"></div>
<div class="t" style="left:18.9px;top:638.39px;font-size:13.1px;transform:scaleX(0.9457);transform-origin:0 50%;color:#111;">Latest SCC date</div>
<div class="row" style="top:654.48px"></div>
<div class="t" style="left:18.9px;top:658.08px;font-size:13.1px;transform:scaleX(0.9562);transform-origin:0 50%;color:#111;">Avg Milkings Last 7 Days</div>
<div class="t" style="left:264.3px;top:658.08px;font-size:13.1px;transform:scaleX(0.9555);transform-origin:0 50%;color:#111;">2.3</div>
<div class="row alt" style="top:674.17px"></div>
<div class="t" style="left:18.9px;top:677.77px;font-size:13.1px;transform:scaleX(0.9586);transform-origin:0 50%;color:#111;">High Activity Level</div>
<div class="row" style="top:693.86px"></div>
<div class="t" style="left:18.9px;top:697.46px;font-size:13.1px;transform:scaleX(0.9642);transform-origin:0 50%;color:#111;">Hours Since High Activity</div>
<div class="row alt" style="top:713.55px"></div>
<div class="t" style="left:18.9px;top:717.15px;font-size:13.1px;letter-spacing:-0.101px;color:#111;">Relative Activity %</div>
<div class="t" style="left:264.3px;top:717.15px;font-size:13.1px;transform:scaleX(0.9539);transform-origin:0 50%;color:#111;">95</div>
<div class="row" style="top:733.24px"></div>
<div class="t" style="left:18.9px;top:736.84px;font-size:13.1px;transform:scaleX(0.9636);transform-origin:0 50%;color:#111;">Meat Withhold Days Remaining</div>
<div class="row alt" style="top:752.93px"></div>
<div class="t" style="left:18.9px;top:756.53px;font-size:13.1px;transform:scaleX(0.9067);transform-origin:0 50%;color:#111;">BCS Event</div>
<div class="row" style="top:772.62px"></div>
<div class="t" style="left:18.9px;top:776.22px;font-size:13.1px;transform:scaleX(0.9226);transform-origin:0 50%;color:#111;">BCS Event Date</div>
<div class="row alt" style="top:792.31px"></div>
<div class="t" style="left:18.9px;top:795.91px;font-size:13.1px;letter-spacing:-0.151px;color:#111;">Concentrates Ration Today</div>
<div class="t" style="left:264.3px;top:795.91px;font-size:13.1px;transform:scaleX(0.9500);transform-origin:0 50%;color:#111;">6.0</div>
<div class="abs" id="coldiv"></div>
<div class="abs" id="split"></div>
<div class="abs" style="left:409px;top:581.0px;width:2px;height:1.5px;background:#f4f4f4"></div>
<div class="abs" style="left:409px;top:584.3px;width:2px;height:1.5px;background:#f4f4f4"></div>
<div class="abs" style="left:409px;top:587.6px;width:2px;height:1.5px;background:#f4f4f4"></div>
<div class="abs" style="left:409px;top:590.9px;width:2px;height:1.5px;background:#f4f4f4"></div>
<div class="abs" style="left:409px;top:594.2px;width:2px;height:1.5px;background:#f4f4f4"></div>
<div class="abs" id="rp"></div>
<div class="tab2" style="left:420px;top:161px;width:54.5px"><span>General</span></div>
<div class="tab2" style="left:476.5px;top:161px;width:48.5px"><span>Events</span></div>
<div class="tab2" style="left:527px;top:161px;width:47.5px"><span>Milking</span></div>
<div class="tab2" style="left:576.5px;top:161px;width:54.0px"><span>Feeding</span></div>
<div class="tab2" style="left:632.5px;top:161px;width:67.5px"><span>OffSprings</span></div>
<div class="tab2" style="left:701.5px;top:161px;width:83.5px"><span>Pedigree Tree</span></div>
<div class="tab2" style="left:786.5px;top:161px;width:92.5px"><span>Lactation Graph</span></div>
<div class="tab2" style="left:880.5px;top:161px;width:75.5px"><span>Camera BCS</span></div>
<div class="tab2" style="left:957px;top:161px;width:90px"><span>Herd Navigator</span></div>
<div class="tab2" style="left:1048.5px;top:161px;width:79.0px"><span>AMS Settings</span></div>
<div class="tab2" style="left:1129.5px;top:161px;width:114.0px"><span>Gate Passing Events</span></div>
<div class="tab2 sel" style="left:1245.5px;top:160px;width:52.5px;height:22px;line-height:21px"><span>Activity</span></div>
<div class="tab2" style="left:1300px;top:161px;width:77px"><span>Performance</span></div>
<div class="abs" id="inner"></div>
<div class="tab2 sel" style="left:423.5px;top:185px;width:65.0px;height:22px;line-height:21px"><span>Date Time</span></div>
<div class="tab2" style="left:490.5px;top:186px;width:34.5px"><span>DIM</span></div>
<div class="tab2" style="left:527px;top:186px;width:88px"><span>Relative Graph</span></div>
<div class="abs" id="xhead"></div>
<div class="t" style="left:430.4px;top:218.8px;font-size:11.2px;transform:scaleX(0.9360);transform-origin:0 50%;color:#fff;">XAxis Range</div>
<div class="abs" id="xbox"></div>
<div class="t" style="left:435.7px;top:257px;font-size:11.2px;letter-spacing:-0.136px;color:#111;">Range:</div>
<div class="input" style="left:492px;top:251px;width:185px;height:20px;border-color:#7a7a7a"></div>
<div class="abs" style="left:494px;top:253px;width:168px;height:16px;border:1px dotted #222"></div>
<div class="t" style="left:495.2px;top:256px;font-size:11.2px;letter-spacing:-0.041px;color:#000;">Last 30 Days + Today</div>
<svg class="abs" style="left:664px;top:258px" width="10" height="8"><path d="M1.5,2 h7 l-3.5,3.6 Z" fill="#222"/></svg>
<div class="t" style="left:690.2px;top:257px;font-size:11.2px;transform:scaleX(0.9507);transform-origin:0 50%;color:#111;">From:</div>
<div class="input" style="left:725px;top:250px;width:82px;height:23px;background:#e7e7e7;border-color:#cdcdcd;box-shadow:inset 0 0 0 1px #8f8f8f"></div>
<div class="t" style="left:730.8px;top:257px;font-size:11.2px;letter-spacing:0.075px;color:#9a9a9a;">9/6/2017</div>
<svg class="abs" style="left:794px;top:259px" width="8" height="6"><path d="M1,1.5 h6 l-3,3 Z" fill="#a8a8a8"/></svg>
<div class="t" style="left:813.5px;top:257px;font-size:11.2px;transform:scaleX(1.0709);transform-origin:0 50%;color:#111;">To:</div>
<div class="input" style="left:837px;top:250px;width:81px;height:23px;background:#e7e7e7;border-color:#cdcdcd;box-shadow:inset 0 0 0 1px #8f8f8f"></div>
<div class="t" style="left:842.2px;top:257px;font-size:11.2px;letter-spacing:0.064px;color:#9a9a9a;">10/6/2017</div>
<svg class="abs" style="left:905px;top:259px" width="8" height="6"><path d="M1,1.5 h6 l-3,3 Z" fill="#a8a8a8"/></svg>
<div class="abs" style="left:922px;top:249px;width:29px;height:26px;background:linear-gradient(#dcdcdc,#c8c8c8);border:1px solid #b0b0b0;border-radius:2px;box-shadow:inset 0 0 0 1px #ececec"></div>
<svg class="abs" style="left:926px;top:252px" width="22" height="20" viewBox="0 0 22 20"><path d="M15.2,5.2 A6.8,6.8 0 1 0 17.6,12.8 L14.8,11.8 A4,4 0 1 1 13,7.3 L10.6,9.6 L18.4,9.8 L18.2,2.3 Z" fill="#9b9b9b" stroke="#8c8c8c" stroke-width="0.5"/></svg>
<div class="abs" style="left:976px;top:256px;width:12px;height:12px;background:#fafafa;border:1px solid #8a8a8a;box-shadow:inset 1px 1px 0 #cfcfcf"></div>
<div class="t" style="left:991.3px;top:257px;font-size:11.2px;transform:scaleX(0.9162);transform-origin:0 50%;color:#111;">Scale All Series</div>
<div class="abs" id="chartpanel"></div>
<svg class="abs" style="left:426px;top:285px" width="1224" height="720" viewBox="426 285 1224 720" font-family="Liberation Sans, sans-serif">
<rect x="469" y="291" width="1174" height="623.5" fill="#fff"/>
<path d="M507.5,291 V914.5 M545.5,291 V914.5 M582.5,291 V914.5 M620.5,291 V914.5 M658.5,291 V914.5 M696.5,291 V914.5 M734.5,291 V914.5 M772.5,291 V914.5 M809.5,291 V914.5 M847.5,291 V914.5 M885.5,291 V914.5 M923.5,291 V914.5 M961.5,291 V914.5 M999.5,291 V914.5 M1037.5,291 V914.5 M1074.5,291 V914.5 M1112.5,291 V914.5 M1150.5,291 V914.5 M1188.5,291 V914.5 M1226.5,291 V914.5 M1264.5,291 V914.5 M1301.5,291 V914.5 M1339.5,291 V914.5 M1377.5,291 V914.5 M1415.5,291 V914.5 M1453.5,291 V914.5 M1491.5,291 V914.5 M1528.5,291 V914.5 M1566.5,291 V914.5 M1604.5,291 V914.5 M469,858.5 H1643 M469,803.5 H1643 M469,747.5 H1643 M469,692.5 H1643 M469,636.5 H1643 M469,581.5 H1643 M469,525.5 H1643 M469,470.5 H1643 M469,414.5 H1643 M469,359.5 H1643 M469,303.5 H1643" stroke="#dfdfdf" stroke-width="1" fill="none" shape-rendering="crispEdges"/>
<path d="M468.9,914.5 L468.9,754.5 L472.8,797.7 L477.6,837.6 L480.8,794.5 L484.0,743.4 L488.1,729.0 L491.9,765.7 L494.5,730.6 L497.4,682.7 L500.6,664.1 L503.8,679.5 L505.7,711.4 L507.9,749.7 L510.2,784.9 L512.1,810.4 L515.9,836.0 L518.5,788.1 L520.7,740.2 L525.5,717.8 L528.1,743.4 L530.3,768.9 L532.8,737.0 L535.4,685.8 L538.3,657.1 L542.4,676.3 L544.3,717.8 L546.3,756.1 L547.9,788.1 L549.5,813.6 L552.7,832.8 L554.9,845.6 L556.8,800.9 L559.0,743.4 L562.9,724.2 L565.4,756.1 L568.0,781.7 L570.5,749.7 L573.1,695.4 L575.7,661.9 L579.8,685.8 L581.7,727.4 L584.0,768.9 L585.9,797.7 L587.8,826.4 L591.9,848.8 L593.9,807.3 L595.8,762.5 L598.0,730.6 L600.6,706.6 L603.1,733.8 L606.0,764.1 L608.6,740.2 L611.4,685.8 L614.3,658.1 L617.5,695.4 L619.4,730.6 L621.3,768.9 L623.3,797.7 L625.2,826.4 L629.3,855.2 L631.9,813.6 L634.1,768.9 L636.7,730.6 L639.2,701.8 L641.5,727.4 L643.7,754.5 L646.6,730.6 L649.5,692.2 L652.3,664.1 L655.5,711.4 L658.1,756.1 L660.3,794.5 L664.5,818.4 L668.6,853.6 L670.5,800.9 L672.5,749.7 L674.7,721.0 L677.3,698.6 L679.8,717.8 L682.7,741.8 L685.2,717.8 L687.8,689.0 L690.0,673.7 L693.9,717.8 L696.1,756.1 L698.0,788.1 L699.9,813.6 L701.9,832.8 L706.0,847.2 L708.2,794.5 L710.2,743.4 L712.7,714.6 L715.6,690.6 L718.1,714.6 L720.4,740.2 L722.9,711.4 L725.5,685.8 L727.7,673.1 L732.2,695.4 L733.8,727.4 L735.4,762.5 L737.3,778.5 L739.6,794.5 L740.0,823.2 L743.2,837.6 L744.8,810.4 L746.4,781.7 L748.9,737.0 L751.2,724.2 L753.4,675.6 L756.0,685.8 L758.5,737.0 L760.8,717.8 L763.0,692.2 L764.9,679.5 L767.2,692.2 L769.4,682.7 L771.9,730.6 L774.2,781.7 L776.7,813.6 L779.0,823.2 L781.5,831.2 L784.1,781.7 L786.3,733.8 L788.6,695.4 L791.1,673.7 L793.4,685.8 L795.3,725.8 L797.5,705.0 L799.7,708.2 L802.0,692.2 L803.9,683.3 L806.5,698.6 L808.7,740.2 L810.9,788.1 L813.5,807.3 L816.7,829.6 L818.6,831.2 L820.5,794.5 L823.1,727.4 L825.6,717.8 L828.5,669.9 L831.1,682.7 L833.0,698.6 L834.9,685.8 L836.8,695.4 L840.0,681.1 L842.2,695.4 L844.2,705.0 L845.4,717.8 L847.7,768.9 L849.6,797.7 L851.8,813.6 L854.4,832.8 L856.6,836.0 L858.8,781.7 L861.4,724.2 L864.0,711.4 L866.5,676.9 L868.4,685.8 L870.4,725.8 L872.6,724.2 L874.8,695.4 L877.4,682.7 L879.6,682.7 L881.5,695.4 L883.8,698.6 L885.7,740.2 L887.0,781.7 L887.9,807.3 L890.2,807.3 L892.7,816.8 L895.0,832.8 L897.2,768.9 L899.7,717.8 L902.0,711.4 L904.5,676.3 L906.8,685.8 L909.3,711.4 L912.5,692.2 L915.7,669.9 L918.0,695.4 L920.5,692.2 L922.7,717.8 L923.7,756.1 L924.7,788.1 L926.6,802.5 L928.5,802.5 L930.7,828.0 L933.3,797.7 L935.5,749.7 L937.4,721.0 L939.7,701.8 L941.9,681.7 L944.5,695.4 L946.7,714.6 L949.3,692.2 L953.4,659.6 L955.7,679.5 L958.2,692.2 L960.4,740.2 L962.7,788.1 L965.2,797.7 L967.5,810.4 L970.0,823.2 L972.6,781.7 L974.8,733.8 L977.1,711.4 L979.6,682.7 L981.9,692.2 L983.8,705.0 L986.0,685.8 L988.6,679.5 L991.4,663.5 L994.0,682.7 L995.6,697.0 L997.2,698.6 L998.8,740.2 L1000.4,781.7 L1002.6,800.9 L1005.2,797.7 L1007.7,810.4 L1010.0,768.9 L1012.2,727.4 L1014.8,701.8 L1017.3,682.7 L1019.6,711.4 L1020.0,711.4 L1022.6,689.0 L1024.8,685.8 L1027.0,669.9 L1029.6,650.7 L1031.8,679.5 L1033.7,695.4 L1036.0,733.8 L1038.2,775.3 L1040.8,794.5 L1043.3,810.4 L1045.6,816.8 L1047.8,794.5 L1050.4,756.1 L1052.9,717.8 L1055.1,705.0 L1057.7,705.0 L1059.9,692.2 L1062.5,682.7 L1064.7,666.7 L1067.0,652.3 L1068.9,679.5 L1071.1,689.0 L1073.4,724.2 L1075.9,749.7 L1078.1,765.7 L1080.7,781.7 L1083.3,813.6 L1085.5,794.5 L1087.7,759.3 L1090.3,727.4 L1092.8,698.6 L1095.4,700.2 L1097.6,690.6 L1099.9,701.8 L1102.1,695.4 L1104.7,671.5 L1106.9,682.7 L1109.5,695.4 L1112.0,701.8 L1114.2,743.4 L1116.8,768.9 L1119.0,784.9 L1121.6,813.6 L1123.8,794.5 L1126.4,749.7 L1128.6,717.8 L1131.2,697.0 L1133.7,698.6 L1136.6,683.3 L1138.8,705.0 L1140.8,695.4 L1143.0,655.5 L1145.2,682.7 L1147.8,692.2 L1150.4,724.2 L1152.6,756.1 L1154.8,775.3 L1157.4,788.1 L1159.6,800.9 L1161.5,810.4 L1163.8,768.9 L1166.0,717.8 L1167.6,701.8 L1170.2,695.4 L1172.1,700.2 L1174.0,692.2 L1175.9,711.4 L1178.1,673.1 L1180.7,650.7 L1182.9,669.9 L1185.5,677.9 L1187.7,717.8 L1190.0,749.7 L1192.5,778.5 L1195.1,781.7 L1197.3,794.5 L1199.6,804.1 L1202.1,775.3 L1204.3,737.0 L1206.6,708.2 L1208.5,692.2 L1210.7,685.8 L1213.0,701.8 L1215.5,695.4 L1218.7,671.5 L1221.3,685.8 L1223.5,685.8 L1225.4,717.8 L1227.7,756.1 L1230.2,764.1 L1232.5,781.7 L1234.7,794.5 L1236.6,800.9 L1238.8,768.9 L1241.1,740.2 L1243.6,711.4 L1246.2,695.4 L1248.4,701.8 L1250.7,695.4 L1253.2,682.7 L1255.8,666.7 L1258.0,682.7 L1260.3,689.0 L1262.8,711.4 L1265.4,740.2 L1267.6,762.5 L1269.8,772.1 L1272.4,788.1 L1274.0,797.7 L1276.2,778.5 L1278.1,740.2 L1280.4,695.4 L1282.6,660.3 L1285.2,637.3 L1287.4,660.3 L1290.0,692.2 L1292.2,669.9 L1294.8,676.3 L1297.3,692.2 L1299.6,698.6 L1300.0,764.1 L1302.6,764.1 L1304.8,768.9 L1307.0,775.3 L1309.6,789.7 L1312.1,781.7 L1314.4,743.4 L1316.6,695.4 L1319.2,666.7 L1321.4,650.7 L1323.0,646.9 L1324.9,666.7 L1327.2,682.7 L1329.4,685.8 L1331.9,682.7 L1334.5,684.2 L1336.7,695.4 L1339.0,730.6 L1341.5,740.2 L1343.8,768.9 L1346.3,778.5 L1348.6,778.5 L1350.5,749.7 L1352.7,705.0 L1355.0,682.7 L1357.5,652.3 L1359.4,636.3 L1360.7,631.5 L1362.6,653.9 L1364.9,673.1 L1366.5,685.8 L1368.7,669.9 L1370.9,682.7 L1373.5,692.2 L1375.7,700.2 L1377.6,717.8 L1379.2,740.2 L1380.8,756.1 L1383.1,764.1 L1385.6,764.1 L1387.9,768.9 L1390.1,733.8 L1392.0,695.4 L1394.2,666.7 L1396.5,650.7 L1398.7,637.9 L1400.6,660.3 L1402.9,682.7 L1404.8,666.7 L1407.0,669.9 L1409.3,685.8 L1411.8,695.4 L1414.1,737.0 L1416.0,756.1 L1418.2,765.7 L1420.8,768.9 L1423.0,762.5 L1425.2,754.5 L1427.2,756.1 L1428.4,717.8 L1430.4,679.5 L1432.6,660.3 L1434.8,644.3 L1436.4,637.3 L1438.3,657.1 L1440.6,673.1 L1442.8,676.3 L1444.7,684.2 L1447.0,689.0 L1448.9,695.4 L1450.8,717.8 L1452.7,733.8 L1455.0,746.5 L1457.2,768.9 L1459.7,765.7 L1462.3,772.1 L1464.2,767.3 L1464.2,914.5 Z" fill="#808080"/>
<path d="M1468.7,914.5 L1468.7,692.2 L1470.9,695.4 L1473.2,679.5 L1475.1,674.7 L1477.3,682.7 L1479.6,663.5 L1481.5,655.5 L1483.7,679.5 L1485.9,682.7 L1488.5,698.6 L1490.7,724.2 L1493.0,733.8 L1495.5,752.9 L1498.1,765.7 L1500.3,778.5 L1502.6,781.7 L1504.5,789.7 L1506.1,768.9 L1507.7,733.8 L1509.9,708.2 L1512.5,695.4 L1514.7,682.7 L1517.3,666.7 L1519.2,660.3 L1520.4,663.5 L1522.7,685.8 L1524.6,695.4 L1526.8,717.8 L1529.1,727.4 L1531.3,743.4 L1533.2,768.9 L1535.5,784.9 L1537.4,791.3 L1539.6,781.7 L1541.9,784.9 L1543.8,768.9 L1546.0,743.4 L1548.2,724.2 L1550.8,705.0 L1553.4,692.2 L1555.6,684.2 L1558.1,685.2 L1561.0,682.7 L1562.9,698.6 L1565.2,717.8 L1567.1,733.8 L1569.3,756.1 L1571.6,775.3 L1573.8,788.1 L1575.7,802.5 L1578.0,788.1 L1580.2,794.5 L1582.1,768.9 L1584.3,740.2 L1586.6,724.2 L1589.1,701.8 L1591.4,685.8 L1593.3,682.7 L1595.5,685.8 L1597.8,687.4 L1599.7,692.2 L1601.3,717.8 L1602.9,730.6 L1604.5,733.8 L1604.5,914.5 Z" fill="#808080"/>
<path d="M468.9,749.7 L470.5,775.3 L471.5,776.9 L474.1,861.6 L476.6,874.3 L478.5,868.0 L480.8,797.7 L482.4,746.5 L485.6,733.8 L488.1,743.4 L489.7,768.9 L491.0,807.3 L492.9,730.6 L495.1,729.0 L496.7,660.3 L498.7,625.1 L500.9,615.6 L501.9,653.9 L503.8,700.2 L504.7,697.0 L506.3,727.4 L508.6,775.3 L511.1,789.7 L513.0,772.1 L515.0,788.1 L516.5,826.4 L517.8,831.2 L519.4,781.7 L521.0,721.0 L522.9,729.0 L524.5,711.4 L526.1,673.7 L527.4,676.3 L529.0,740.2 L530.9,788.1 L532.2,799.3 L533.8,746.5 L534.8,754.5 L536.7,682.7 L538.6,666.7 L539.9,675.6 L542.1,676.9 L543.4,721.0 L544.7,713.0 L546.3,768.9 L548.8,813.6 L551.1,812.7 L552.7,832.8 L553.9,863.8 L555.8,845.6 L557.4,788.1 L559.7,708.2 L561.6,702.8 L563.2,706.6 L564.2,713.0 L565.4,746.5 L566.7,748.1 L568.6,776.9 L569.9,773.7 L571.8,724.2 L574.1,663.5 L576.0,639.5 L577.3,665.1 L578.5,684.2 L580.1,679.5 L581.4,684.2 L583.0,724.2 L584.3,772.1 L586.2,775.3 L587.8,807.3 L588.8,829.6 L590.0,831.2 L591.6,839.2 L593.5,844.6 L594.8,788.1 L596.7,743.4 L598.0,752.9 L599.9,695.4 L600.9,646.9 L602.8,643.7 L605.0,663.5 L606.3,652.3 L607.9,646.9 L609.2,685.8 L610.8,749.7 L612.1,709.8 L614.3,710.8 L616.5,730.6 L618.8,749.7 L620.7,768.9 L622.3,794.5 L624.2,832.8 L625.5,852.0 L627.4,855.8 L629.6,852.0 L631.2,800.9 L633.5,781.7 L635.1,772.1 L637.6,724.2 L638.9,717.2 L640.8,732.2 L642.1,740.8 L644.0,740.2 L645.3,698.6 L646.3,678.8 L647.2,698.6 L649.1,700.2 L650.4,722.6 L651.7,682.7 L653.3,671.5 L654.9,714.6 L655.8,738.6 L657.1,717.8 L658.1,703.4 L660.0,722.6 L661.3,791.3 L662.9,773.7 L664.5,778.5 L666.1,820.0 L667.3,836.0 L668.3,842.4 L669.9,810.4 L671.8,759.3 L673.4,743.4 L675.7,721.0 L677.9,700.2 L679.5,711.4 L681.4,724.2 L683.0,737.0 L684.6,724.2 L686.2,713.0 L687.5,690.6 L688.4,677.9 L689.7,698.6 L690.7,721.0 L691.6,746.5 L692.9,698.6 L694.2,727.4 L695.5,740.2 L697.1,781.7 L698.3,824.8 L699.6,785.8 L701.2,786.5 L702.2,820.0 L704.1,839.2 L705.4,842.4 L707.0,813.6 L708.9,759.3 L710.5,711.4 L712.4,695.4 L714.0,660.3 L715.3,641.1 L716.9,647.5 L718.1,698.6 L719.4,749.7 L720.4,775.3 L722.0,724.2 L723.3,696.4 L724.5,702.8 L726.1,682.7 L727.7,683.6 L729.0,650.7 L730.3,631.5 L731.2,621.9 L732.2,657.1 L733.2,689.0 L734.8,724.2 L735.7,762.5 L737.0,727.4 L738.6,743.4 L739.9,794.5 L740.0,813.6 L741.3,818.4 L742.6,810.4 L744.5,768.9 L746.4,721.0 L748.6,705.7 L750.9,706.6 L752.5,657.1 L753.7,618.8 L754.7,618.1 L756.0,663.5 L757.6,689.0 L758.5,701.8 L759.8,692.2 L761.4,674.7 L762.4,711.4 L764.0,738.6 L765.6,724.2 L767.5,714.6 L769.1,688.4 L770.4,727.4 L771.9,756.1 L773.5,807.3 L775.1,842.4 L776.1,794.5 L777.7,794.5 L779.6,783.3 L780.9,783.3 L782.5,724.2 L784.4,664.1 L786.0,685.8 L787.6,727.4 L789.5,685.8 L791.1,658.7 L792.4,658.7 L793.7,701.8 L795.3,724.2 L796.9,682.7 L799.1,682.7 L800.7,684.2 L802.3,679.5 L803.6,634.7 L805.2,639.5 L806.5,685.8 L807.7,714.6 L809.3,740.2 L810.9,794.5 L812.2,842.4 L813.5,871.2 L814.4,890.3 L816.0,861.6 L817.6,855.2 L819.2,832.8 L820.8,781.7 L822.4,730.6 L824.3,689.0 L825.6,700.2 L827.2,692.2 L828.8,717.8 L830.4,746.5 L832.0,705.0 L833.6,673.1 L835.2,687.4 L836.8,657.1 L838.4,615.6 L840.5,552.0 L841.1,552.0 L841.9,653.9 L843.2,705.0 L844.2,695.4 L845.4,743.4 L847.0,794.5 L848.6,832.8 L849.6,847.2 L851.8,853.6 L853.4,864.8 L854.7,869.6 L856.6,858.4 L857.6,813.6 L858.8,749.7 L860.1,711.4 L862.0,695.4 L864.0,692.2 L865.9,697.0 L868.1,697.0 L869.4,773.7 L871.0,746.5 L873.2,732.8 L874.8,735.4 L876.1,740.2 L877.4,722.6 L879.0,700.2 L880.6,730.6 L882.2,756.1 L883.5,711.4 L885.4,668.3 L886.6,717.8 L887.9,783.9 L890.2,783.3 L891.1,762.5 L892.4,744.0 L893.4,788.1 L894.3,820.0 L895.6,838.6 L896.9,800.9 L899.1,786.5 L900.4,794.5 L901.7,807.3 L902.9,737.0 L904.2,709.8 L906.1,730.6 L907.4,682.7 L909.3,640.5 L910.9,666.7 L912.5,693.8 L914.1,642.7 L915.4,631.5 L916.7,679.5 L918.3,748.1 L919.6,724.2 L920.8,705.0 L922.4,752.9 L923.7,783.3 L925.3,788.1 L926.9,767.3 L928.2,759.3 L929.1,800.9 L930.7,820.0 L931.7,828.0 L933.0,824.8 L934.2,797.7 L935.8,799.3 L937.1,768.9 L938.7,724.2 L940.3,712.0 L941.9,740.2 L944.5,775.3 L946.1,724.2 L947.7,711.4 L949.3,679.5 L950.9,618.8 L953.4,609.8 L954.7,631.5 L955.7,649.1 L956.9,635.4 L958.2,669.9 L959.5,721.0 L961.1,727.4 L962.7,730.6 L964.3,749.7 L965.6,775.3 L966.5,794.5 L967.8,781.7 L969.4,780.1 L970.7,816.8 L972.3,810.4 L973.5,768.9 L975.5,711.4 L976.7,727.4 L977.7,746.5 L979.0,685.8 L980.3,631.5 L981.5,602.1 L982.5,628.3 L983.8,661.9 L985.0,625.1 L986.3,616.2 L987.6,634.7 L988.9,650.7 L990.5,657.1 L991.8,647.5 L992.7,637.3 L994.3,657.1 L995.9,671.5 L997.2,679.5 L998.5,711.4 L1000.1,743.4 L1002.0,742.7 L1003.6,745.6 L1005.8,740.2 L1007.1,737.0 L1008.4,713.0 L1010.3,710.8 L1011.6,764.1 L1013.5,772.7 L1014.8,730.6 L1015.7,695.4 L1017.0,668.3 L1018.3,682.7 L1019.6,727.4 L1020.0,725.8 L1021.6,716.2 L1023.8,709.8 L1025.4,730.6 L1026.7,756.1 L1027.7,764.1 L1028.9,717.8 L1030.2,693.8 L1031.8,693.8 L1033.1,719.4 L1034.7,700.2 L1036.0,698.6 L1037.6,700.2 L1038.8,746.5 L1040.4,727.4 L1040.8,730.6 L1041.4,762.5 L1043.0,788.1 L1044.6,813.6 L1046.2,816.8 L1047.5,832.8 L1048.4,845.6 L1049.7,820.0 L1051.0,788.1 L1052.3,756.1 L1054.2,741.8 L1056.1,741.8 L1057.4,663.5 L1058.7,673.1 L1059.9,695.4 L1061.2,711.4 L1062.2,724.2 L1063.5,663.5 L1064.7,615.6 L1065.7,593.2 L1066.6,628.3 L1067.6,669.9 L1068.6,685.8 L1069.8,689.0 L1071.1,655.5 L1072.1,679.5 L1073.4,708.2 L1074.6,740.2 L1076.2,741.8 L1077.8,756.1 L1079.4,768.9 L1081.0,788.1 L1082.3,845.6 L1083.6,853.6 L1084.5,855.2 L1085.5,813.6 L1087.1,753.6 L1088.7,754.5 L1090.3,714.6 L1091.9,682.7 L1093.5,666.7 L1094.8,685.8 L1096.0,705.0 L1097.6,711.4 L1098.9,695.4 L1100.2,717.8 L1101.2,756.1 L1102.1,774.7 L1103.4,749.7 L1104.7,717.8 L1105.9,705.0 L1107.2,692.2 L1108.5,682.0 L1110.4,681.7 L1112.3,682.7 L1113.6,717.8 L1114.9,756.1 L1116.2,794.5 L1117.4,818.4 L1119.0,828.0 L1120.6,839.2 L1121.9,852.0 L1122.9,854.5 L1123.8,852.0 L1125.1,813.6 L1126.4,762.5 L1127.7,724.2 L1128.9,692.2 L1130.5,673.1 L1131.8,671.5 L1133.1,692.2 L1134.4,717.8 L1135.7,701.8 L1136.6,708.2 L1138.2,730.6 L1139.5,749.1 L1140.8,717.8 L1141.7,669.9 L1142.7,620.4 L1144.0,625.1 L1144.9,644.3 L1145.9,682.7 L1147.5,684.2 L1149.1,692.2 L1150.4,693.8 L1151.0,674.7 L1151.9,711.4 L1153.2,740.2 L1154.5,768.9 L1156.1,788.1 L1157.4,768.9 L1158.7,757.7 L1159.6,794.5 L1160.6,832.8 L1161.5,856.8 L1162.8,813.6 L1164.4,762.5 L1165.7,727.4 L1166.6,713.0 L1167.9,724.2 L1169.2,735.4 L1170.5,716.2 L1171.4,695.4 L1172.4,716.2 L1173.4,705.0 L1174.6,711.4 L1175.9,773.7 L1177.2,724.2 L1178.1,663.5 L1179.1,645.9 L1180.7,650.7 L1182.3,663.5 L1183.6,673.1 L1184.5,677.9 L1185.8,657.1 L1186.8,717.8 L1187.7,756.1 L1188.7,781.7 L1190.3,768.9 L1191.9,730.6 L1193.2,709.8 L1194.4,717.8 L1195.7,740.2 L1197.3,708.2 L1198.6,730.6 L1199.9,762.5 L1201.2,786.5 L1202.4,768.9 L1203.4,759.3 L1204.7,775.3 L1205.9,730.6 L1207.2,698.6 L1208.5,684.2 L1210.1,679.5 L1211.4,692.2 L1212.7,703.4 L1214.2,701.8 L1215.5,695.4 L1216.8,692.2 L1218.4,693.8 L1220.0,717.8 L1221.3,745.0 L1222.6,721.0 L1223.8,740.2 L1225.1,781.7 L1226.4,813.6 L1227.7,837.6 L1228.9,826.4 L1230.2,807.3 L1231.8,784.9 L1233.4,791.3 L1235.0,797.7 L1236.3,800.9 L1237.3,756.1 L1238.5,711.4 L1239.8,724.2 L1241.1,737.0 L1242.7,755.5 L1244.0,730.6 L1245.6,685.8 L1246.5,666.7 L1247.8,685.8 L1249.1,701.8 L1250.7,685.8 L1252.3,653.9 L1253.5,631.5 L1254.8,619.4 L1256.1,634.7 L1257.4,657.1 L1259.0,657.7 L1260.3,673.1 L1261.9,682.7 L1263.1,705.0 L1264.7,735.4 L1266.3,737.0 L1267.6,759.3 L1268.9,764.1 L1270.2,749.7 L1271.1,735.4 L1272.1,756.1 L1273.0,777.9 L1274.0,743.4 L1275.0,685.8 L1276.2,621.9 L1276.1,620.0 L1278.5,520.0 L1281.4,372.0 L1283.7,348.2 L1285.9,394.6 L1289.3,509.6 L1292.1,620.0 L1292.2,621.9 L1293.5,669.9 L1294.4,740.2 L1295.4,716.2 L1297.0,717.8 L1298.3,749.7 L1299.6,764.1 L1300.0,767.3 L1301.3,740.2 L1302.6,701.8 L1303.8,687.4 L1305.1,724.2 L1306.4,764.1 L1308.3,759.3 L1309.9,774.7 L1311.2,749.7 L1312.1,729.0 L1313.7,756.1 L1314.7,713.0 L1316.6,708.2 L1317.9,725.8 L1319.5,721.0 L1320.8,749.7 L1322.4,725.8 L1324.0,762.5 L1325.6,775.3 L1327.2,724.2 L1328.4,666.7 L1329.7,682.7 L1331.0,711.4 L1332.3,754.5 L1333.5,698.6 L1334.8,653.9 L1335.8,633.1 L1337.1,666.7 L1338.3,705.0 L1339.6,730.6 L1340.9,711.4 L1341.9,685.8 L1343.1,730.6 L1344.1,781.7 L1345.4,812.0 L1347.0,815.2 L1347.9,778.5 L1349.2,776.9 L1350.5,781.7 L1351.8,740.2 L1353.0,685.8 L1354.3,666.7 L1355.9,661.9 L1357.2,666.7 L1358.5,612.4 L1359.7,602.8 L1360.7,598.0 L1362.0,625.1 L1363.3,650.7 L1364.5,666.7 L1365.8,671.5 L1366.8,653.9 L1368.1,652.6 L1369.3,653.9 L1370.3,679.5 L1371.6,708.2 L1373.2,710.8 L1374.8,711.4 L1376.0,700.2 L1377.3,708.2 L1378.6,717.8 L1379.9,726.7 L1381.5,727.4 L1383.4,724.2 L1384.7,740.2 L1386.3,756.1 L1387.9,756.1 L1389.1,767.3 L1390.4,737.0 L1391.7,708.2 L1393.0,698.6 L1394.2,682.7 L1395.2,665.1 L1396.5,695.4 L1397.8,724.2 L1399.0,740.2 L1400.3,778.5 L1401.6,737.0 L1402.9,685.8 L1404.2,703.4 L1405.4,705.0 L1407.0,703.4 L1408.6,669.9 L1409.9,649.1 L1411.2,669.9 L1412.5,711.4 L1413.4,749.7 L1414.4,778.5 L1416.0,772.1 L1417.3,743.4 L1418.2,732.2 L1419.5,794.5 L1420.8,805.7 L1422.0,775.3 L1423.3,764.1 L1424.6,762.5 L1425.9,772.1 L1427.2,778.5 L1428.4,730.6 L1429.7,679.5 L1431.0,685.8 L1432.3,701.8 L1433.5,698.6 L1435.1,685.8 L1436.4,695.4 L1437.7,704.4 L1439.0,685.8 L1440.6,682.7 L1442.2,681.1 L1443.5,663.5 L1444.7,657.1 L1446.0,650.7 L1447.6,657.1 L1448.9,685.8 L1450.2,717.8 L1451.4,748.1 L1452.7,717.8 L1454.0,692.2 L1455.3,740.2 L1456.5,775.3 L1458.1,776.9 L1459.7,775.3 L1461.0,794.5 L1462.3,820.0 L1463.3,836.0 L1464.5,832.8" fill="none" stroke="#ee1c1c" stroke-width="1.15" stroke-linejoin="round"/>
<path d="M1468.4,609.2 L1469.3,653.9 L1470.3,695.4 L1471.6,705.0 L1472.8,730.6 L1474.1,746.5 L1475.7,754.5 L1477.0,737.0 L1478.3,711.4 L1479.9,685.8 L1481.5,658.7 L1483.4,653.9 L1485.0,641.1 L1485.9,669.9 L1487.2,695.4 L1488.5,701.8 L1489.8,724.2 L1491.1,756.1 L1492.3,781.7 L1493.6,792.9 L1494.9,752.9 L1496.2,752.9 L1497.4,765.7 L1498.7,794.5 L1500.0,811.4 L1501.3,788.1 L1502.6,737.0 L1503.8,772.1 L1505.1,788.1 L1506.4,789.7 L1507.7,768.9 L1509.3,749.7 L1510.9,717.8 L1512.5,716.2 L1513.7,692.2 L1515.0,661.9 L1516.3,666.7 L1517.3,674.7 L1518.5,647.5 L1520.1,631.5 L1521.1,653.9 L1522.0,679.5 L1523.0,698.6 L1524.3,682.7 L1525.6,664.1 L1526.8,673.1 L1527.8,685.8 L1528.8,724.2 L1530.0,756.1 L1531.6,775.3 L1532.9,794.5 L1534.2,820.0 L1535.5,852.0 L1536.7,867.3 L1538.0,839.2 L1539.6,820.0 L1541.2,810.4 L1542.8,807.3 L1544.4,807.3 L1545.7,756.1 L1546.6,717.8 L1547.6,698.6 L1549.2,701.8 L1550.5,708.2 L1551.8,695.4 L1552.7,653.9 L1553.7,626.7 L1555.0,647.5 L1555.9,695.4 L1557.2,749.7 L1558.1,783.3 L1559.4,722.6 L1561.0,727.4 L1562.3,756.1 L1563.6,788.7 L1564.9,762.5 L1566.1,746.5 L1567.1,738.6 L1568.4,762.5 L1569.3,790.6 L1570.6,773.7 L1571.9,781.7 L1573.2,794.5 L1574.4,813.6 L1575.4,836.0 L1577.0,834.4 L1578.3,804.1 L1579.6,813.6 L1580.5,823.2 L1581.8,768.9 L1583.1,721.0 L1584.3,720.4 L1585.6,717.8 L1586.9,695.4 L1588.2,676.3 L1589.5,657.7 L1590.7,682.7 L1591.7,695.4 L1593.0,692.2 L1594.2,695.4 L1595.5,708.2 L1596.8,730.6 L1598.1,749.7 L1599.4,762.5 L1600.6,788.1 L1602.2,799.3 L1603.5,749.7 L1604.5,723.5" fill="none" stroke="#ee1c1c" stroke-width="1.15" stroke-linejoin="round"/>
<path d="M1285.5,291 V914.5" stroke="#d030d0" stroke-width="1.2"/>
<circle cx="1286.4" cy="394.3" r="3.2" fill="#ff0000"/><circle cx="1287.2" cy="657" r="2.8" fill="#7a7a7a"/>
<path d="M1271,896.5 L1278,883 L1285,896.5 Z" fill="#ff0000"/>
<path d="M1259.5,907.6 L1264.7,902.4 L1269.9,907.6 L1264.7,912.8 Z" fill="#0000a8"/>
<path d="M1296.6,907.6 L1301.8,902.4 L1307.0,907.6 L1301.8,912.8 Z" fill="#0000a8"/>
<path d="M468.6,291 V914.8 H1643" stroke="#8a8a8a" stroke-width="1.6" fill="none"/>
<path d="M464,914.5 H469 M466,896.0 H469 M466,877.5 H469 M464,858.5 H469 M466,840.0 H469 M466,821.5 H469 M464,803.5 H469 M466,785.0 H469 M466,766.5 H469 M464,747.5 H469 M466,729.0 H469 M466,710.5 H469 M464,692.5 H469 M466,674.0 H469 M466,655.5 H469 M464,636.5 H469 M466,618.0 H469 M466,599.5 H469 M464,581.5 H469 M466,563.0 H469 M466,544.5 H469 M464,525.5 H469 M466,507.0 H469 M466,488.5 H469 M464,470.5 H469 M466,452.0 H469 M466,433.5 H469 M464,414.5 H469 M466,396.0 H469 M466,377.5 H469 M464,359.5 H469 M466,341.0 H469 M466,322.5 H469 M464,303.5 H469 M469.5,914.5 V919.5 M507.5,914.5 V919.5 M545.5,914.5 V919.5 M582.5,914.5 V919.5 M620.5,914.5 V919.5 M658.5,914.5 V919.5 M696.5,914.5 V919.5 M734.5,914.5 V919.5 M772.5,914.5 V919.5 M809.5,914.5 V919.5 M847.5,914.5 V919.5 M885.5,914.5 V919.5 M923.5,914.5 V919.5 M961.5,914.5 V919.5 M999.5,914.5 V919.5 M1037.5,914.5 V919.5 M1074.5,914.5 V919.5 M1112.5,914.5 V919.5 M1150.5,914.5 V919.5 M1188.5,914.5 V919.5 M1226.5,914.5 V919.5 M1264.5,914.5 V919.5 M1301.5,914.5 V919.5 M1339.5,914.5 V919.5 M1377.5,914.5 V919.5 M1415.5,914.5 V919.5 M1453.5,914.5 V919.5 M1491.5,914.5 V919.5 M1528.5,914.5 V919.5 M1566.5,914.5 V919.5 M1604.5,914.5 V919.5" stroke="#8a8a8a" stroke-width="1.2" fill="none"/>
<text x="458" y="918.4" font-size="11.4" text-anchor="end" fill="#1a1a1a">0</text>
<text x="458" y="862.9" font-size="11.4" text-anchor="end" fill="#1a1a1a">22</text>
<text x="458" y="807.4" font-size="11.4" text-anchor="end" fill="#1a1a1a">44</text>
<text x="458" y="751.9" font-size="11.4" text-anchor="end" fill="#1a1a1a">66</text>
<text x="458" y="696.4" font-size="11.4" text-anchor="end" fill="#1a1a1a">88</text>
<text x="458" y="640.9" font-size="11.4" text-anchor="end" fill="#1a1a1a">110</text>
<text x="458" y="585.4" font-size="11.4" text-anchor="end" fill="#1a1a1a">132</text>
<text x="458" y="529.9" font-size="11.4" text-anchor="end" fill="#1a1a1a">154</text>
<text x="458" y="474.4" font-size="11.4" text-anchor="end" fill="#1a1a1a">176</text>
<text x="458" y="418.9" font-size="11.4" text-anchor="end" fill="#1a1a1a">198</text>
<text x="458" y="363.4" font-size="11.4" text-anchor="end" fill="#1a1a1a">220</text>
<text x="458" y="307.9" font-size="11.4" text-anchor="end" fill="#1a1a1a">242</text>
<text transform="translate(470.3,934) rotate(-45)" font-size="11.8" text-anchor="end" fill="#1a1a1a">9/6/2017</text>
<text transform="translate(508.3,934) rotate(-45)" font-size="11.8" text-anchor="end" fill="#1a1a1a">9/7/2017</text>
<text transform="translate(546.3,934) rotate(-45)" font-size="11.8" text-anchor="end" fill="#1a1a1a">9/8/2017</text>
<text transform="translate(583.3,934) rotate(-45)" font-size="11.8" text-anchor="end" fill="#1a1a1a">9/9/2017</text>
<text transform="translate(621.3,934) rotate(-45)" font-size="11.8" text-anchor="end" fill="#1a1a1a">9/10/2017</text>
<text transform="translate(659.3,934) rotate(-45)" font-size="11.8" text-anchor="end" fill="#1a1a1a">9/11/2017</text>
<text transform="translate(697.3,934) rotate(-45)" font-size="11.8" text-anchor="end" fill="#1a1a1a">9/12/2017</text>
<text transform="translate(735.3,934) rotate(-45)" font-size="11.8" text-anchor="end" fill="#1a1a1a">9/13/2017</text>
<text transform="translate(773.3,934) rotate(-45)" font-size="11.8" text-anchor="end" fill="#1a1a1a">9/14/2017</text>
<text transform="translate(810.3,934) rotate(-45)" font-size="11.8" text-anchor="end" fill="#1a1a1a">9/15/2017</text>
<text transform="translate(848.3,934) rotate(-45)" font-size="11.8" text-anchor="end" fill="#1a1a1a">9/16/2017</text>
<text transform="translate(886.3,934) rotate(-45)" font-size="11.8" text-anchor="end" fill="#1a1a1a">9/17/2017</text>
<text transform="translate(924.3,934) rotate(-45)" font-size="11.8" text-anchor="end" fill="#1a1a1a">9/18/2017</text>
<text transform="translate(962.3,934) rotate(-45)" font-size="11.8" text-anchor="end" fill="#1a1a1a">9/19/2017</text>
<text transform="translate(1000.3,934) rotate(-45)" font-size="11.8" text-anchor="end" fill="#1a1a1a">9/20/2017</text>
<text transform="translate(1038.3,934) rotate(-45)" font-size="11.8" text-anchor="end" fill="#1a1a1a">9/21/2017</text>
<text transform="translate(1075.3,934) rotate(-45)" font-size="11.8" text-anchor="end" fill="#1a1a1a">9/22/2017</text>
<text transform="translate(1113.3,934) rotate(-45)" font-size="11.8" text-anchor="end" fill="#1a1a1a">9/23/2017</text>
<text transform="translate(1151.3,934) rotate(-45)" font-size="11.8" text-anchor="end" fill="#1a1a1a">9/24/2017</text>
<text transform="translate(1189.3,934) rotate(-45)" font-size="11.8" text-anchor="end" fill="#1a1a1a">9/25/2017</text>
<text transform="translate(1227.3,934) rotate(-45)" font-size="11.8" text-anchor="end" fill="#1a1a1a">9/26/2017</text>
<text transform="translate(1265.3,934) rotate(-45)" font-size="11.8" text-anchor="end" fill="#1a1a1a">9/27/2017</text>
<text transform="translate(1302.3,934) rotate(-45)" font-size="11.8" text-anchor="end" fill="#1a1a1a">9/28/2017</text>
<text transform="translate(1340.3,934) rotate(-45)" font-size="11.8" text-anchor="end" fill="#1a1a1a">9/29/2017</text>
<text transform="translate(1378.3,934) rotate(-45)" font-size="11.8" text-anchor="end" fill="#1a1a1a">9/30/2017</text>
<text transform="translate(1416.3,934) rotate(-45)" font-size="11.8" text-anchor="end" fill="#1a1a1a">10/1/2017</text>
<text transform="translate(1454.3,934) rotate(-45)" font-size="11.8" text-anchor="end" fill="#1a1a1a">10/2/2017</text>
<text transform="translate(1492.3,934) rotate(-45)" font-size="11.8" text-anchor="end" fill="#1a1a1a">10/3/2017</text>
<text transform="translate(1529.3,934) rotate(-45)" font-size="11.8" text-anchor="end" fill="#1a1a1a">10/4/2017</text>
<text transform="translate(1567.3,934) rotate(-45)" font-size="11.8" text-anchor="end" fill="#1a1a1a">10/5/2017</text>
<text transform="translate(1605.3,934) rotate(-45)" font-size="11.8" text-anchor="end" fill="#1a1a1a">10/6/2017</text>
<text x="1054.8" y="994" font-size="15.8" text-anchor="middle" fill="#111">Date</text>
</svg>
<div class="abs" id="legend"></div>
<div class="lg" style="top:295.0px;border-color:#d8d8d8"></div>
<div class="t" style="left:1681px;top:295.9px;font-size:11.7px;transform:scaleX(0.9435);transform-origin:0 50%;color:#111;">Average Activity Level</div>
<div class="lg" style="top:313.6px;border-color:#8a8a8a"></div>
<svg class="abs" style="left:1660px;top:313.6px" width="14" height="14"><path d="M3,6.6 L5.8,10.6 L11,2.8" fill="none" stroke="#808080" stroke-width="1.8"/></svg>
<div class="t" style="left:1681px;top:314.5px;font-size:11.7px;transform:scaleX(0.9357);transform-origin:0 50%;color:#111;">Average Activity Level - 6 Hours Combined</div>
<div class="lg" style="top:332.3px;border-color:#1e8c1e"></div>
<div class="t" style="left:1681px;top:333.2px;font-size:11.7px;letter-spacing:-0.085px;color:#111;">+ Activity Event</div>
<div class="lg" style="top:350.9px;border-color:#ffd940"></div>
<div class="t" style="left:1681px;top:351.8px;font-size:11.7px;letter-spacing:0.000px;color:#111;">++ Activity Event</div>
<div class="lg" style="top:369.6px;border-color:#ff1010"></div>
<svg class="abs" style="left:1660px;top:369.6px" width="14" height="14"><path d="M3,6.6 L5.8,10.6 L11,2.8" fill="none" stroke="#ff0000" stroke-width="1.8"/></svg>
<div class="t" style="left:1681px;top:370.5px;font-size:11.7px;letter-spacing:0.060px;color:#111;">+++ Activity Event</div>
<div class="lg" style="top:388.2px;border-color:#8b2fa0"></div>
<div class="t" style="left:1681px;top:389.1px;font-size:11.7px;transform:scaleX(0.9305);transform-origin:0 50%;color:#111;">Feed Table Change Event</div>
<div class="lg" style="top:406.9px;border-color:#ff2a2a"></div>
<div class="t" style="left:1681px;top:407.8px;font-size:11.7px;transform:scaleX(0.8842);transform-origin:0 50%;color:#111;">BCS Event</div>
<div class="lg" style="top:425.5px;border-color:#d9c43a"></div>
<div class="t" style="left:1681px;top:426.4px;font-size:11.7px;transform:scaleX(0.9383);transform-origin:0 50%;color:#111;">Notes Event</div>
<div class="lg" style="top:444.2px;border-color:#1a1ab4"></div>
<svg class="abs" style="left:1660px;top:444.2px" width="14" height="14"><path d="M3,6.6 L5.8,10.6 L11,2.8" fill="none" stroke="#0000b0" stroke-width="1.8"/></svg>
<div class="t" style="left:1681px;top:445.1px;font-size:11.7px;transform:scaleX(0.9487);transform-origin:0 50%;color:#111;">Insemination Event</div>
<div class="lg" style="top:462.9px;border-color:#1a1ab4"></div>
<svg class="abs" style="left:1660px;top:462.9px" width="14" height="14"><path d="M3,6.6 L5.8,10.6 L11,2.8" fill="none" stroke="#0000b0" stroke-width="1.8"/></svg>
<div class="t" style="left:1681px;top:463.8px;font-size:11.7px;transform:scaleX(0.9378);transform-origin:0 50%;color:#111;">Calving Event</div>
<div class="lg" style="top:481.5px;border-color:#1a1ab4"></div>
<svg class="abs" style="left:1660px;top:481.5px" width="14" height="14"><path d="M3,6.6 L5.8,10.6 L11,2.8" fill="none" stroke="#0000b0" stroke-width="1.8"/></svg>
<div class="t" style="left:1681px;top:482.4px;font-size:11.7px;transform:scaleX(0.9138);transform-origin:0 50%;color:#111;">Pregnancy Check Event</div>
<div class="lg" style="top:500.1px;border-color:#1a1ab4"></div>
<svg class="abs" style="left:1660px;top:500.1px" width="14" height="14"><path d="M3,6.6 L5.8,10.6 L11,2.8" fill="none" stroke="#0000b0" stroke-width="1.8"/></svg>
<div class="t" style="left:1681px;top:501.0px;font-size:11.7px;transform:scaleX(0.9450);transform-origin:0 50%;color:#111;">Heat Event</div>
<div class="lg" style="top:518.8px;border-color:#1a1ab4"></div>
<svg class="abs" style="left:1660px;top:518.8px" width="14" height="14"><path d="M3,6.6 L5.8,10.6 L11,2.8" fill="none" stroke="#0000b0" stroke-width="1.8"/></svg>
<div class="t" style="left:1681px;top:519.7px;font-size:11.7px;letter-spacing:-0.177px;color:#111;">Dry Off Event</div>
<div class="lg" style="top:537.5px;border-color:#8a1a8a"></div>
<svg class="abs" style="left:1660px;top:537.5px" width="14" height="14"><path d="M3,6.6 L5.8,10.6 L11,2.8" fill="none" stroke="#800080" stroke-width="1.8"/></svg>
<div class="t" style="left:1681px;top:538.4px;font-size:11.7px;transform:scaleX(0.9252);transform-origin:0 50%;color:#111;">Group Change Event</div>
<div class="lg" style="top:556.1px;border-color:#8a1a9a"></div>
<div class="t" style="left:1681px;top:557.0px;font-size:11.7px;transform:scaleX(0.9355);transform-origin:0 50%;color:#111;">Build Up Event</div>
<div class="lg" style="top:574.8px;border-color:#20ee20"></div>
<svg class="abs" style="left:1660px;top:574.8px" width="14" height="14"><path d="M3,6.6 L5.8,10.6 L11,2.8" fill="none" stroke="#00e000" stroke-width="1.8"/></svg>
<div class="t" style="left:1681px;top:575.6px;font-size:11.7px;transform:scaleX(0.9418);transform-origin:0 50%;color:#111;">Diagnosis Treatment Event</div>
<div class="lg" style="top:593.4px;border-color:#2a2ae0"></div>
<div class="t" style="left:1681px;top:594.3px;font-size:11.7px;transform:scaleX(0.9482);transform-origin:0 50%;color:#111;">Daily Yield</div>
<div class="lg" style="top:612.0px;border-color:#4a4aee"></div>
<div class="t" style="left:1681px;top:612.9px;font-size:11.7px;transform:scaleX(0.9224);transform-origin:0 50%;color:#111;">Session Yield</div>
<div class="lg" style="top:630.7px;border-color:#ffd9b0"></div>
<div class="t" style="left:1681px;top:631.6px;font-size:11.7px;transform:scaleX(0.9265);transform-origin:0 50%;color:#111;">Consumed per Visit</div>
<div class="lg" style="top:649.3px;border-color:#ff2020"></div>
<div class="t" style="left:1681px;top:650.2px;font-size:11.7px;transform:scaleX(0.9491);transform-origin:0 50%;color:#111;">Activity Level</div>
<div class="lg" style="top:668.0px;border-color:#2020e0"></div>
<div class="t" style="left:1681px;top:668.9px;font-size:11.7px;transform:scaleX(0.9409);transform-origin:0 50%;color:#111;">Relative ActivityWill Not Be Translated</div>
<div class="lg" style="top:686.6px;border-color:#8a2aa0"></div>
<div class="t" style="left:1681px;top:687.5px;font-size:11.7px;letter-spacing:-0.166px;color:#111;">Low Activity Probability (%)</div>
<div class="lg" style="top:705.3px;border-color:#ff8a4a"></div>
<div class="t" style="left:1681px;top:706.2px;font-size:11.7px;letter-spacing:-0.147px;color:#111;">High Activity Probability (%)</div>
<div class="lg" style="top:724.0px;border-color:#ff1010"></div>
<svg class="abs" style="left:1660px;top:724.0px" width="14" height="14"><path d="M3,6.6 L5.8,10.6 L11,2.8" fill="none" stroke="#ff0000" stroke-width="1.8"/></svg>
<div class="t" style="left:1681px;top:724.9px;font-size:11.7px;transform:scaleX(0.9431);transform-origin:0 50%;color:#111;">Activity Level - 6 Hours Combined</div>
<div class="lg" style="top:742.6px;border-color:#1e7a1e"></div>
<div class="t" style="left:1681px;top:743.5px;font-size:11.7px;transform:scaleX(0.9424);transform-origin:0 50%;color:#111;">Activity Level - 24 Hours Combined</div>
<div class="lg" style="top:761.2px;border-color:#8a8a1a"></div>
<div class="t" style="left:1681px;top:762.1px;font-size:11.7px;transform:scaleX(0.9303);transform-origin:0 50%;color:#111;">Progesterone Smoothed</div>
<div class="lg" style="top:779.9px;border-color:#2020e0"></div>
<div class="t" style="left:1681px;top:780.8px;font-size:11.7px;letter-spacing:-0.132px;color:#111;">Relative Activity (%)</div>
<div class="abs" id="tooltip"></div>
<div class="t" style="left:1311.3px;top:331.2px;font-size:11.7px;transform:scaleX(0.9416);transform-origin:0 50%;color:#222;">9/27/2017 2:00 PM</div>
<div class="t" style="left:1328.3px;top:351.7px;font-size:11.7px;transform:scaleX(0.9412);transform-origin:0 50%;color:#222;">Average Activity Level - 6 Hours Combined: 102.1</div>
<div class="t" style="left:1328.3px;top:372.7px;font-size:11.7px;transform:scaleX(0.9427);transform-origin:0 50%;color:#222;">Activity Level - 6 Hours Combined: 206.33</div>
<div class="t" style="left:1311.3px;top:394.2px;font-size:11.7px;transform:scaleX(0.9559);transform-origin:0 50%;color:#222;">9/27/2017 9:00 AM</div>
<div class="t" style="left:1329.1px;top:415.2px;font-size:11.7px;letter-spacing:0.049px;color:#222;">+++ Activity Event</div>
<svg class="abs" style="left:1305px;top:345px" width="24" height="84" viewBox="1305 345 24 84"><path d="M1310,364.5 L1314.3,358.5 C1312.5,356 1313.2,352 1317.2,352 C1321.2,352 1321.9,356 1320.1,358.5 L1324.5,364.5 Z" fill="#808080"/><path d="M1309.5,378.5 H1324.5" stroke="#ff0000" stroke-width="1"/><circle cx="1317" cy="378.5" r="2" fill="#ff0000"/><path d="M1312.5,424 L1317,415.5 L1321.5,424 Z" fill="#ff0000"/></svg>
<div class="abs" id="status"></div>
<div class="abs" style="left:121px;top:1027px;width:1px;height:6px;background:#a9abae"></div>
<div class="abs" style="left:225px;top:1027px;width:1px;height:6px;background:#a9abae"></div>
<div class="abs" style="left:430px;top:1027px;width:1px;height:6px;background:#a9abae"></div>
</body></html>
